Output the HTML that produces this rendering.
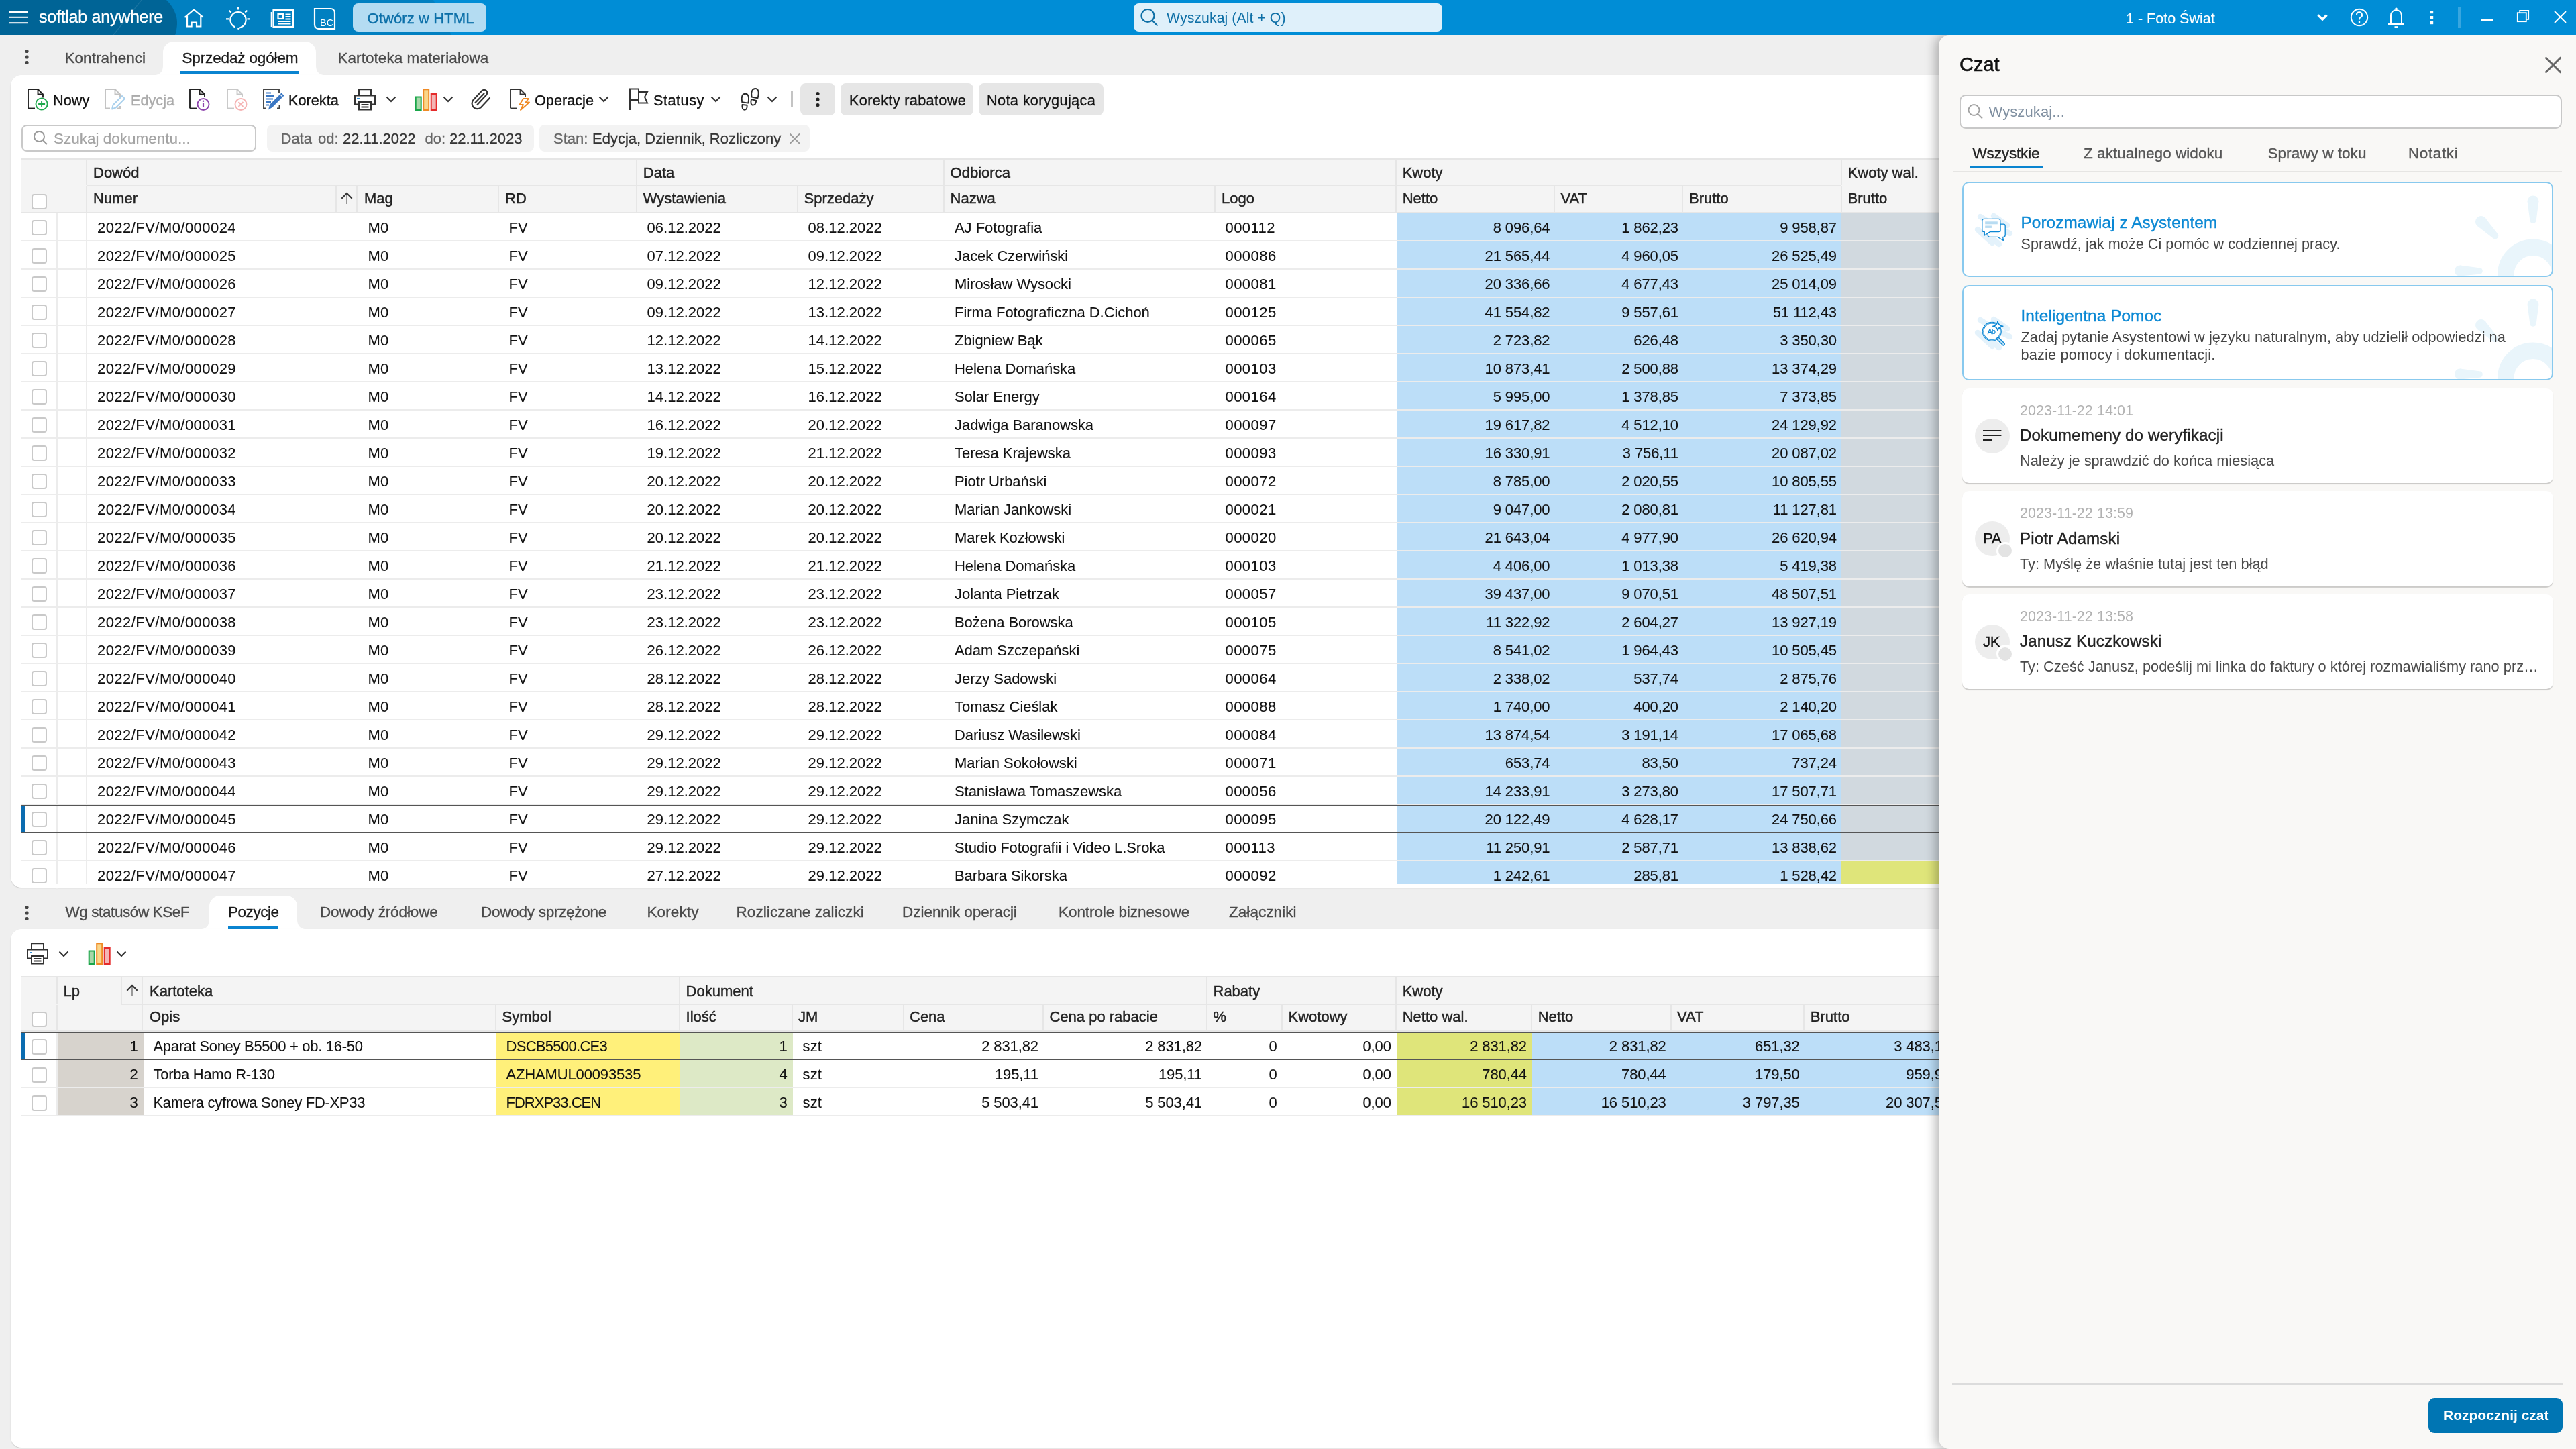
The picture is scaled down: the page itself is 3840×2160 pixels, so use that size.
<!DOCTYPE html><html><head><meta charset="utf-8"><title>softlab</title><style>
*{margin:0;padding:0}
html,body{width:3840px;height:2160px;overflow:hidden}
body{position:relative;background:#efefef;font-family:"Liberation Sans",sans-serif;}
.t{position:absolute;white-space:nowrap}
svg{overflow:visible}
</style></head><body><div id="root" style="position:absolute;left:0;top:0;width:3840px;height:2160px;overflow:hidden;will-change:transform">
<svg style="position:absolute;left:36px;top:72px;" width="10" height="26" viewBox="0 0 10 26"><circle cx="4" cy="4.5" r="2.6" fill="#444"/><circle cx="4" cy="13" r="2.6" fill="#444"/><circle cx="4" cy="21.5" r="2.6" fill="#444"/></svg>
<svg style="position:absolute;left:227px;top:62px;" width="260" height="51" viewBox="0 0 260 51"><path d="M0,50.5 Q16,50.5 16,36 V16 A16,16 0 0 1 32,0 H228 A16,16 0 0 1 244,16 V36 Q244,50.5 260,50.5 Z" fill="#fff"/></svg>
<div class="t" style="top:75.78px;font-size:22.5px;line-height:22.5px;color:#4a4a4a;left:96.50px;letter-spacing:0.05px;-webkit-text-stroke:0.35px #4a4a4a;">Kontrahenci</div>
<div class="t" style="top:75.78px;font-size:22.5px;line-height:22.5px;color:#1a1a1a;left:271.50px;letter-spacing:-0.15px;-webkit-text-stroke:0.35px #1a1a1a;">Sprzedaż ogółem</div>
<div style="position:absolute;left:269px;top:106px;width:177px;height:4px;background:#0a84d0;"></div>
<div class="t" style="top:75.78px;font-size:22.5px;line-height:22.5px;color:#4a4a4a;left:503.50px;letter-spacing:0.05px;-webkit-text-stroke:0.35px #4a4a4a;">Kartoteka materiałowa</div>
<div style="position:absolute;left:16px;top:112px;width:3808px;height:1211px;background:#fff;border-radius:16px;box-shadow:0 1px 1.5px rgba(0,0,0,0.16);"></div>
<svg style="position:absolute;left:40px;top:131px;" width="34" height="35" viewBox="0 0 34 35"><path d="M2,30.5 V2 H16.5 L24,9.5 V14.5" stroke="#222" stroke-width="1.9" fill="none"/><path d="M16.5,2 V9.5 H24" stroke="#222" stroke-width="1.9" fill="none"/><path d="M2,30.5 H12" stroke="#222" stroke-width="1.9"/><circle cx="22.1" cy="24" r="8.6" stroke="#1ea84c" stroke-width="1.9" fill="#fff"/><path d="M22.1,19 V29 M17.1,24 H27.1" stroke="#1ea84c" stroke-width="1.9"/></svg>
<div class="t" style="top:138.96px;font-size:21.7px;line-height:21.7px;color:#111;left:79.00px;-webkit-text-stroke:0.35px #111;">Nowy</div>
<svg style="position:absolute;left:155px;top:131px;" width="34" height="35" viewBox="0 0 34 35"><path d="M2,30.5 V2 H16.5 L24,9.5 V14" stroke="#c2c2c2" stroke-width="1.9" fill="none"/><path d="M16.5,2 V9.5 H24" stroke="#c2c2c2" stroke-width="1.9" fill="none"/><path d="M2,30.5 H9 M19,30.5 H24 V27" stroke="#c2c2c2" stroke-width="1.9" fill="none"/><path d="M12,31.5 L13.5,25.5 L27,12 L31,16 L17.5,29.5 Z" stroke="#a9d0ec" stroke-width="1.9" fill="none" stroke-linejoin="round"/></svg>
<div class="t" style="top:138.96px;font-size:21.7px;line-height:21.7px;color:#ababab;left:195.00px;-webkit-text-stroke:0.35px #ababab;">Edycja</div>
<svg style="position:absolute;left:281px;top:131px;" width="34" height="35" viewBox="0 0 34 35"><path d="M2,30.5 V2 H16.5 L24,9.5 V14" stroke="#222" stroke-width="1.9" fill="none"/><path d="M16.5,2 V9.5 H24" stroke="#222" stroke-width="1.9" fill="none"/><path d="M2,30.5 H12" stroke="#222" stroke-width="1.9"/><circle cx="22" cy="24.5" r="8.5" stroke="#8e44ad" stroke-width="1.9" fill="#fff"/><path d="M22,22.5 V29" stroke="#8e44ad" stroke-width="2.2"/><circle cx="22" cy="19.8" r="1.3" fill="#8e44ad"/></svg>
<svg style="position:absolute;left:337px;top:131px;" width="34" height="35" viewBox="0 0 34 35"><path d="M2,30.5 V2 H16.5 L24,9.5 V14" stroke="#c8c8c8" stroke-width="1.9" fill="none"/><path d="M16.5,2 V9.5 H24" stroke="#c8c8c8" stroke-width="1.9" fill="none"/><path d="M2,30.5 H12" stroke="#c8c8c8" stroke-width="1.9"/><circle cx="22" cy="24.5" r="8.5" stroke="#f5b4b4" stroke-width="1.9" fill="#fff"/><path d="M18.5,21 L25.5,28 M25.5,21 L18.5,28" stroke="#f5b4b4" stroke-width="1.9"/></svg>
<svg style="position:absolute;left:391px;top:131px;" width="34" height="35" viewBox="0 0 34 35"><path d="M6,30.5 H2 V2 H25 V8" stroke="#444" stroke-width="1.9" fill="none"/><path d="M22,30.5 H25.5 V26" stroke="#444" stroke-width="1.9" fill="none"/><path d="M6,7.5 H13 M6,12 H18 M6,16.5 H16 M6,21 H13 M6,25.5 H10" stroke="#3a77c3" stroke-width="2"/><path d="M9,32.5 L11,25 L26,10 L30,14 L15,29 Z" fill="#3a77c3"/><path d="M26.8,9.2 L28.5,7.5 L32.5,11.5 L30.8,13.2 Z" fill="#3a77c3"/></svg>
<div class="t" style="top:138.96px;font-size:21.7px;line-height:21.7px;color:#111;left:430.00px;-webkit-text-stroke:0.35px #111;">Korekta</div>
<svg style="position:absolute;left:526px;top:130px;" width="36" height="36" viewBox="0 0 36 36"><path d="M9,11 V3.3 H27 V11" stroke="#333" stroke-width="2" fill="none"/><path d="M9,25.5 H3 V12.5 H33 V25.5 H27" stroke="#333" stroke-width="2" fill="none"/><rect x="9" y="22" width="18" height="11.5" stroke="#333" stroke-width="2" fill="#fff"/><path d="M12.5,26 H23.5 M12.5,29.5 H23.5" stroke="#333" stroke-width="1.8"/><path d="M6,17 H10" stroke="#1b83d0" stroke-width="1.8"/></svg>
<svg style="position:absolute;left:575px;top:142px;" width="16" height="12" viewBox="0 0 16 12"><path d="M1.5,2.5 L8,9 L14.5,2.5" stroke="#333" stroke-width="2" fill="none"/></svg>
<svg style="position:absolute;left:617px;top:130px;" width="36" height="36" viewBox="0 0 36 36"><rect x="2.7" y="14.5" width="8" height="19.5" stroke="#1aa64a" stroke-width="2" fill="#a7d8a9"/><rect x="14.2" y="3.3" width="8" height="30.7" stroke="#ef8a25" stroke-width="2" fill="#f9d68a"/><rect x="25.7" y="10" width="8" height="24" stroke="#e52b2b" stroke-width="2" fill="#f3b5b5"/></svg>
<svg style="position:absolute;left:660px;top:142px;" width="16" height="12" viewBox="0 0 16 12"><path d="M1.5,2.5 L8,9 L14.5,2.5" stroke="#333" stroke-width="2" fill="none"/></svg>
<svg style="position:absolute;left:701px;top:130px;" width="34" height="36" viewBox="0 0 34 36"><path d="M10.5,26 L24,11.5 A4.6,4.6 0 0 0 17.5,5 L4.5,19 A8,8 0 0 0 15.5,30.5 L29,16" stroke="#333" stroke-width="2.2" fill="none" stroke-linecap="round"/><path d="M7.5,23 L20.5,9.5" stroke="#333" stroke-width="2.2" fill="none" stroke-linecap="round"/></svg>
<svg style="position:absolute;left:759px;top:131px;" width="34" height="35" viewBox="0 0 34 35"><path d="M2,30.5 V2 H16.5 L24,9.5 V14" stroke="#333" stroke-width="1.9" fill="none"/><path d="M16.5,2 V9.5 H24" stroke="#333" stroke-width="1.9" fill="none"/><path d="M2,30.5 H12" stroke="#333" stroke-width="1.9"/><path d="M21,16 L15.5,25 H21 L17,33 L30,21.5 H24.5 L29,16 Z" stroke="#ef8a25" stroke-width="1.9" fill="#fff" stroke-linejoin="round"/></svg>
<div class="t" style="top:138.96px;font-size:21.7px;line-height:21.7px;color:#111;left:797.00px;-webkit-text-stroke:0.35px #111;">Operacje</div>
<svg style="position:absolute;left:892px;top:142px;" width="16" height="12" viewBox="0 0 16 12"><path d="M1.5,2.5 L8,9 L14.5,2.5" stroke="#333" stroke-width="2" fill="none"/></svg>
<svg style="position:absolute;left:936px;top:130px;" width="34" height="36" viewBox="0 0 34 36"><path d="M3,34 V2.5 H16 V7 H29 L25,14.5 L29,23.5 H16 V19 H3" stroke="#333" stroke-width="2" fill="none"/><path d="M16,7 V19" stroke="#333" stroke-width="2"/></svg>
<div class="t" style="top:138.96px;font-size:21.7px;line-height:21.7px;color:#111;left:974.00px;letter-spacing:0.5px;-webkit-text-stroke:0.35px #111;">Statusy</div>
<svg style="position:absolute;left:1059px;top:142px;" width="16" height="12" viewBox="0 0 16 12"><path d="M1.5,2.5 L8,9 L14.5,2.5" stroke="#333" stroke-width="2" fill="none"/></svg>
<svg style="position:absolute;left:1103px;top:130px;" width="30" height="36" viewBox="0 0 30 36"><path d="M3.2,22.2 C1.8,15 3,9.8 8,9.8 C13,9.8 13.8,15 12.4,23.6 Z" stroke="#2a2a2a" stroke-width="1.9" fill="none" stroke-linejoin="round"/><path d="M3.5,26 L10.6,26.8 C11,31 9.5,33.8 7,33.8 C4,33.8 3,30.5 3.5,26 Z" stroke="#2a2a2a" stroke-width="1.9" fill="none" stroke-linejoin="round"/><path d="M17.5,14.5 C16,7 18.5,2 23,2 C27.5,2 29,7 26.5,16.3 Z" stroke="#2a2a2a" stroke-width="1.9" fill="none" stroke-linejoin="round"/><path d="M17,18 L24.3,19.8 C24,24 22,26.6 19.5,26.6 C16.5,26.6 15.5,23 17,18 Z" stroke="#2a2a2a" stroke-width="1.9" fill="none" stroke-linejoin="round"/></svg>
<svg style="position:absolute;left:1143px;top:142px;" width="16" height="12" viewBox="0 0 16 12"><path d="M1.5,2.5 L8,9 L14.5,2.5" stroke="#333" stroke-width="2" fill="none"/></svg>
<div style="position:absolute;left:1179px;top:136px;width:2.5px;height:24px;background:#c4c4c4;"></div>
<div style="position:absolute;left:1193px;top:124px;width:52px;height:48px;background:#e6e6e6;border-radius:8px;"></div>
<svg style="position:absolute;left:1213px;top:135px;" width="12" height="26" viewBox="0 0 12 26"><circle cx="6" cy="4.5" r="2.6" fill="#222"/><circle cx="6" cy="13" r="2.6" fill="#222"/><circle cx="6" cy="21.5" r="2.6" fill="#222"/></svg>
<div style="position:absolute;left:1253px;top:124px;width:198px;height:48px;background:#e6e6e6;border-radius:8px;"></div>
<div class="t" style="top:138.96px;font-size:21.7px;line-height:21.7px;color:#111;left:1266.00px;letter-spacing:0.33px;-webkit-text-stroke:0.35px #111;">Korekty rabatowe</div>
<div style="position:absolute;left:1459px;top:124px;width:186px;height:48px;background:#e6e6e6;border-radius:8px;"></div>
<div class="t" style="top:138.96px;font-size:21.7px;line-height:21.7px;color:#111;left:1471.00px;letter-spacing:0.36px;-webkit-text-stroke:0.35px #111;">Nota korygująca</div>
<div style="position:absolute;left:32px;top:186px;width:349.5px;height:40px;background:#fff;box-sizing:border-box;border:2px solid #c9c9c9;border-radius:8px;"></div>
<svg style="position:absolute;left:48px;top:193px;" width="26" height="26" viewBox="0 0 26 26"><circle cx="10.5" cy="10.5" r="7.5" stroke="#9a9a9a" stroke-width="2" fill="none"/><path d="M16,16 L22,22" stroke="#9a9a9a" stroke-width="2"/></svg>
<div class="t" style="top:195.78px;font-size:22.5px;line-height:22.5px;color:#a3a3a3;left:80.00px;-webkit-text-stroke:0.2px #a3a3a3;">Szukaj dokumentu...</div>
<div style="position:absolute;left:398px;top:186px;width:397.5px;height:40px;background:#f3f3f3;border-radius:8px;"></div>
<div class="t" style="top:195.60px;font-size:22px;line-height:22px;color:#666;left:418.50px;-webkit-text-stroke:0.3px #666;">Data</div>
<div class="t" style="top:195.60px;font-size:22px;line-height:22px;color:#666;left:474.00px;-webkit-text-stroke:0.3px #666;">od:</div>
<div class="t" style="top:195.60px;font-size:22px;line-height:22px;color:#333;left:511.00px;-webkit-text-stroke:0.3px #333;">22.11.2022</div>
<div class="t" style="top:195.60px;font-size:22px;line-height:22px;color:#666;left:633.50px;-webkit-text-stroke:0.3px #666;">do:</div>
<div class="t" style="top:195.60px;font-size:22px;line-height:22px;color:#333;left:670.00px;-webkit-text-stroke:0.3px #333;">22.11.2023</div>
<div style="position:absolute;left:804px;top:186px;width:403px;height:40px;background:#f3f3f3;border-radius:8px;"></div>
<div class="t" style="top:195.60px;font-size:22px;line-height:22px;color:#666;left:825.00px;-webkit-text-stroke:0.3px #666;">Stan:</div>
<div class="t" style="top:195.60px;font-size:22px;line-height:22px;color:#333;left:883.00px;-webkit-text-stroke:0.3px #333;">Edycja, Dziennik, Rozliczony</div>
<svg style="position:absolute;left:1175px;top:197px;" width="20" height="20" viewBox="0 0 20 20"><path d="M2.5,2.5 L17,17 M17,2.5 L2.5,17" stroke="#9a9a9a" stroke-width="1.8"/></svg>
<div style="position:absolute;left:32px;top:236px;width:2868px;height:2px;background:#e6e6e6;"></div>
<div style="position:absolute;left:32px;top:238px;width:2868px;height:78px;background:#f4f4f4;"></div>
<div style="position:absolute;left:129px;top:276px;width:2615.8px;height:2px;background:#e6e6e6;"></div>
<div style="position:absolute;left:32px;top:316px;width:2868px;height:2px;background:#e6e6e6;"></div>
<div style="position:absolute;left:128px;top:238px;width:2px;height:38px;background:#e6e6e6;"></div>
<div style="position:absolute;left:947.8px;top:238px;width:2px;height:38px;background:#e6e6e6;"></div>
<div style="position:absolute;left:1405.7px;top:238px;width:2px;height:38px;background:#e6e6e6;"></div>
<div style="position:absolute;left:2079.7px;top:238px;width:2px;height:38px;background:#e6e6e6;"></div>
<div style="position:absolute;left:2743.8px;top:238px;width:2px;height:38px;background:#e6e6e6;"></div>
<div style="position:absolute;left:128px;top:278px;width:2px;height:38px;background:#e6e6e6;"></div>
<div style="position:absolute;left:499.6px;top:278px;width:2px;height:38px;background:#e6e6e6;"></div>
<div style="position:absolute;left:531.4px;top:278px;width:2px;height:38px;background:#e6e6e6;"></div>
<div style="position:absolute;left:741.6px;top:278px;width:2px;height:38px;background:#e6e6e6;"></div>
<div style="position:absolute;left:947.8px;top:278px;width:2px;height:38px;background:#e6e6e6;"></div>
<div style="position:absolute;left:1187.6px;top:278px;width:2px;height:38px;background:#e6e6e6;"></div>
<div style="position:absolute;left:1405.7px;top:278px;width:2px;height:38px;background:#e6e6e6;"></div>
<div style="position:absolute;left:1810px;top:278px;width:2px;height:38px;background:#e6e6e6;"></div>
<div style="position:absolute;left:2079.7px;top:278px;width:2px;height:38px;background:#e6e6e6;"></div>
<div style="position:absolute;left:2315.8px;top:278px;width:2px;height:38px;background:#e6e6e6;"></div>
<div style="position:absolute;left:2507.3px;top:278px;width:2px;height:38px;background:#e6e6e6;"></div>
<div style="position:absolute;left:2743.8px;top:278px;width:2px;height:38px;background:#e6e6e6;"></div>
<div style="position:absolute;left:46.5px;top:288.5px;width:23px;height:23px;background:#fff;box-sizing:border-box;border:2px solid #c9c9c9;border-radius:4px;"></div>
<div class="t" style="top:247.00px;font-size:22px;line-height:22px;color:#222;left:139.00px;-webkit-text-stroke:0.45px #222;">Dowód</div>
<div class="t" style="top:247.00px;font-size:22px;line-height:22px;color:#222;left:958.80px;-webkit-text-stroke:0.45px #222;">Data</div>
<div class="t" style="top:247.00px;font-size:22px;line-height:22px;color:#222;left:1416.60px;-webkit-text-stroke:0.45px #222;">Odbiorca</div>
<div class="t" style="top:247.00px;font-size:22px;line-height:22px;color:#222;left:2090.70px;-webkit-text-stroke:0.45px #222;">Kwoty</div>
<div class="t" style="top:247.00px;font-size:22px;line-height:22px;color:#222;left:2754.60px;-webkit-text-stroke:0.45px #222;">Kwoty wal.</div>
<div class="t" style="top:285.00px;font-size:22px;line-height:22px;color:#222;left:139.00px;-webkit-text-stroke:0.45px #222;">Numer</div>
<div class="t" style="top:285.00px;font-size:22px;line-height:22px;color:#222;left:543.00px;-webkit-text-stroke:0.45px #222;">Mag</div>
<div class="t" style="top:285.00px;font-size:22px;line-height:22px;color:#222;left:753.00px;-webkit-text-stroke:0.45px #222;">RD</div>
<div class="t" style="top:285.00px;font-size:22px;line-height:22px;color:#222;left:958.80px;-webkit-text-stroke:0.45px #222;">Wystawienia</div>
<div class="t" style="top:285.00px;font-size:22px;line-height:22px;color:#222;left:1198.50px;-webkit-text-stroke:0.45px #222;">Sprzedaży</div>
<div class="t" style="top:285.00px;font-size:22px;line-height:22px;color:#222;left:1416.60px;-webkit-text-stroke:0.45px #222;">Nazwa</div>
<div class="t" style="top:285.00px;font-size:22px;line-height:22px;color:#222;left:1821.00px;-webkit-text-stroke:0.45px #222;">Logo</div>
<div class="t" style="top:285.00px;font-size:22px;line-height:22px;color:#222;left:2090.70px;-webkit-text-stroke:0.45px #222;">Netto</div>
<div class="t" style="top:285.00px;font-size:22px;line-height:22px;color:#222;left:2326.50px;-webkit-text-stroke:0.45px #222;">VAT</div>
<div class="t" style="top:285.00px;font-size:22px;line-height:22px;color:#222;left:2518.00px;-webkit-text-stroke:0.45px #222;">Brutto</div>
<div class="t" style="top:285.00px;font-size:22px;line-height:22px;color:#222;left:2754.60px;-webkit-text-stroke:0.45px #222;">Brutto</div>
<svg style="position:absolute;left:507px;top:285px;" width="20" height="20" viewBox="0 0 20 20"><path d="M10,4 V19" stroke="#888" stroke-width="1.7"/><path d="M2.3,10.8 L10,3 L17.7,10.8" stroke="#333" stroke-width="2" fill="none"/></svg>
<div style="position:absolute;left:2082px;top:318px;width:662.8000000000002px;height:40px;background:#bcdef8;"></div>
<div style="position:absolute;left:2744.8px;top:318px;width:155.19999999999982px;height:40px;background:#d1d9df;"></div>
<div style="position:absolute;left:32px;top:358px;width:2868px;height:2px;background:#ececec;"></div>
<div style="position:absolute;left:84.2px;top:318px;width:1.6px;height:42px;background:#ececec;"></div>
<div style="position:absolute;left:128.2px;top:318px;width:1.6px;height:42px;background:#ececec;"></div>
<div style="position:absolute;left:46.5px;top:327.5px;width:23px;height:23px;background:#fff;box-sizing:border-box;border:2px solid #c9c9c9;border-radius:4px;"></div>
<div class="t" style="top:329.00px;font-size:22px;line-height:22px;color:#111;left:145.00px;letter-spacing:0.45px;-webkit-text-stroke:0.12px #111;">2022/FV/M0/000024</div>
<div class="t" style="top:329.00px;font-size:22px;line-height:22px;color:#111;left:548.50px;letter-spacing:0.15px;-webkit-text-stroke:0.12px #111;">M0</div>
<div class="t" style="top:329.00px;font-size:22px;line-height:22px;color:#111;left:758.50px;letter-spacing:0.15px;-webkit-text-stroke:0.12px #111;">FV</div>
<div class="t" style="top:329.00px;font-size:22px;line-height:22px;color:#111;left:964.50px;letter-spacing:0.02px;-webkit-text-stroke:0.12px #111;">06.12.2022</div>
<div class="t" style="top:329.00px;font-size:22px;line-height:22px;color:#111;left:1204.50px;letter-spacing:0.02px;-webkit-text-stroke:0.12px #111;">08.12.2022</div>
<div class="t" style="top:329.00px;font-size:22px;line-height:22px;color:#111;left:1423.00px;letter-spacing:-0.05px;-webkit-text-stroke:0.12px #111;">AJ Fotografia</div>
<div class="t" style="top:329.00px;font-size:22px;line-height:22px;color:#111;left:1826.50px;letter-spacing:0.45px;-webkit-text-stroke:0.12px #111;">000112</div>
<div class="t" style="top:329.00px;font-size:22px;line-height:22px;color:#111;right:1529.50px;letter-spacing:-0.1px;-webkit-text-stroke:0.12px #111;">8 096,64</div>
<div class="t" style="top:329.00px;font-size:22px;line-height:22px;color:#111;right:1338.00px;letter-spacing:-0.1px;-webkit-text-stroke:0.12px #111;">1 862,23</div>
<div class="t" style="top:329.00px;font-size:22px;line-height:22px;color:#111;right:1102.00px;letter-spacing:-0.1px;-webkit-text-stroke:0.12px #111;">9 958,87</div>
<div style="position:absolute;left:2082px;top:360px;width:662.8000000000002px;height:40px;background:#bcdef8;"></div>
<div style="position:absolute;left:2744.8px;top:360px;width:155.19999999999982px;height:40px;background:#d1d9df;"></div>
<div style="position:absolute;left:32px;top:400px;width:2868px;height:2px;background:#ececec;"></div>
<div style="position:absolute;left:84.2px;top:360px;width:1.6px;height:42px;background:#ececec;"></div>
<div style="position:absolute;left:128.2px;top:360px;width:1.6px;height:42px;background:#ececec;"></div>
<div style="position:absolute;left:46.5px;top:369.5px;width:23px;height:23px;background:#fff;box-sizing:border-box;border:2px solid #c9c9c9;border-radius:4px;"></div>
<div class="t" style="top:371.00px;font-size:22px;line-height:22px;color:#111;left:145.00px;letter-spacing:0.45px;-webkit-text-stroke:0.12px #111;">2022/FV/M0/000025</div>
<div class="t" style="top:371.00px;font-size:22px;line-height:22px;color:#111;left:548.50px;letter-spacing:0.15px;-webkit-text-stroke:0.12px #111;">M0</div>
<div class="t" style="top:371.00px;font-size:22px;line-height:22px;color:#111;left:758.50px;letter-spacing:0.15px;-webkit-text-stroke:0.12px #111;">FV</div>
<div class="t" style="top:371.00px;font-size:22px;line-height:22px;color:#111;left:964.50px;letter-spacing:0.02px;-webkit-text-stroke:0.12px #111;">07.12.2022</div>
<div class="t" style="top:371.00px;font-size:22px;line-height:22px;color:#111;left:1204.50px;letter-spacing:0.02px;-webkit-text-stroke:0.12px #111;">09.12.2022</div>
<div class="t" style="top:371.00px;font-size:22px;line-height:22px;color:#111;left:1423.00px;letter-spacing:-0.05px;-webkit-text-stroke:0.12px #111;">Jacek Czerwiński</div>
<div class="t" style="top:371.00px;font-size:22px;line-height:22px;color:#111;left:1826.50px;letter-spacing:0.45px;-webkit-text-stroke:0.12px #111;">000086</div>
<div class="t" style="top:371.00px;font-size:22px;line-height:22px;color:#111;right:1529.50px;letter-spacing:-0.1px;-webkit-text-stroke:0.12px #111;">21 565,44</div>
<div class="t" style="top:371.00px;font-size:22px;line-height:22px;color:#111;right:1338.00px;letter-spacing:-0.1px;-webkit-text-stroke:0.12px #111;">4 960,05</div>
<div class="t" style="top:371.00px;font-size:22px;line-height:22px;color:#111;right:1102.00px;letter-spacing:-0.1px;-webkit-text-stroke:0.12px #111;">26 525,49</div>
<div style="position:absolute;left:2082px;top:402px;width:662.8000000000002px;height:40px;background:#bcdef8;"></div>
<div style="position:absolute;left:2744.8px;top:402px;width:155.19999999999982px;height:40px;background:#d1d9df;"></div>
<div style="position:absolute;left:32px;top:442px;width:2868px;height:2px;background:#ececec;"></div>
<div style="position:absolute;left:84.2px;top:402px;width:1.6px;height:42px;background:#ececec;"></div>
<div style="position:absolute;left:128.2px;top:402px;width:1.6px;height:42px;background:#ececec;"></div>
<div style="position:absolute;left:46.5px;top:411.5px;width:23px;height:23px;background:#fff;box-sizing:border-box;border:2px solid #c9c9c9;border-radius:4px;"></div>
<div class="t" style="top:413.00px;font-size:22px;line-height:22px;color:#111;left:145.00px;letter-spacing:0.45px;-webkit-text-stroke:0.12px #111;">2022/FV/M0/000026</div>
<div class="t" style="top:413.00px;font-size:22px;line-height:22px;color:#111;left:548.50px;letter-spacing:0.15px;-webkit-text-stroke:0.12px #111;">M0</div>
<div class="t" style="top:413.00px;font-size:22px;line-height:22px;color:#111;left:758.50px;letter-spacing:0.15px;-webkit-text-stroke:0.12px #111;">FV</div>
<div class="t" style="top:413.00px;font-size:22px;line-height:22px;color:#111;left:964.50px;letter-spacing:0.02px;-webkit-text-stroke:0.12px #111;">09.12.2022</div>
<div class="t" style="top:413.00px;font-size:22px;line-height:22px;color:#111;left:1204.50px;letter-spacing:0.02px;-webkit-text-stroke:0.12px #111;">12.12.2022</div>
<div class="t" style="top:413.00px;font-size:22px;line-height:22px;color:#111;left:1423.00px;letter-spacing:-0.05px;-webkit-text-stroke:0.12px #111;">Mirosław Wysocki</div>
<div class="t" style="top:413.00px;font-size:22px;line-height:22px;color:#111;left:1826.50px;letter-spacing:0.45px;-webkit-text-stroke:0.12px #111;">000081</div>
<div class="t" style="top:413.00px;font-size:22px;line-height:22px;color:#111;right:1529.50px;letter-spacing:-0.1px;-webkit-text-stroke:0.12px #111;">20 336,66</div>
<div class="t" style="top:413.00px;font-size:22px;line-height:22px;color:#111;right:1338.00px;letter-spacing:-0.1px;-webkit-text-stroke:0.12px #111;">4 677,43</div>
<div class="t" style="top:413.00px;font-size:22px;line-height:22px;color:#111;right:1102.00px;letter-spacing:-0.1px;-webkit-text-stroke:0.12px #111;">25 014,09</div>
<div style="position:absolute;left:2082px;top:444px;width:662.8000000000002px;height:40px;background:#bcdef8;"></div>
<div style="position:absolute;left:2744.8px;top:444px;width:155.19999999999982px;height:40px;background:#d1d9df;"></div>
<div style="position:absolute;left:32px;top:484px;width:2868px;height:2px;background:#ececec;"></div>
<div style="position:absolute;left:84.2px;top:444px;width:1.6px;height:42px;background:#ececec;"></div>
<div style="position:absolute;left:128.2px;top:444px;width:1.6px;height:42px;background:#ececec;"></div>
<div style="position:absolute;left:46.5px;top:453.5px;width:23px;height:23px;background:#fff;box-sizing:border-box;border:2px solid #c9c9c9;border-radius:4px;"></div>
<div class="t" style="top:455.00px;font-size:22px;line-height:22px;color:#111;left:145.00px;letter-spacing:0.45px;-webkit-text-stroke:0.12px #111;">2022/FV/M0/000027</div>
<div class="t" style="top:455.00px;font-size:22px;line-height:22px;color:#111;left:548.50px;letter-spacing:0.15px;-webkit-text-stroke:0.12px #111;">M0</div>
<div class="t" style="top:455.00px;font-size:22px;line-height:22px;color:#111;left:758.50px;letter-spacing:0.15px;-webkit-text-stroke:0.12px #111;">FV</div>
<div class="t" style="top:455.00px;font-size:22px;line-height:22px;color:#111;left:964.50px;letter-spacing:0.02px;-webkit-text-stroke:0.12px #111;">09.12.2022</div>
<div class="t" style="top:455.00px;font-size:22px;line-height:22px;color:#111;left:1204.50px;letter-spacing:0.02px;-webkit-text-stroke:0.12px #111;">13.12.2022</div>
<div class="t" style="top:455.00px;font-size:22px;line-height:22px;color:#111;left:1423.00px;letter-spacing:-0.05px;-webkit-text-stroke:0.12px #111;">Firma Fotograficzna D.Cichoń</div>
<div class="t" style="top:455.00px;font-size:22px;line-height:22px;color:#111;left:1826.50px;letter-spacing:0.45px;-webkit-text-stroke:0.12px #111;">000125</div>
<div class="t" style="top:455.00px;font-size:22px;line-height:22px;color:#111;right:1529.50px;letter-spacing:-0.1px;-webkit-text-stroke:0.12px #111;">41 554,82</div>
<div class="t" style="top:455.00px;font-size:22px;line-height:22px;color:#111;right:1338.00px;letter-spacing:-0.1px;-webkit-text-stroke:0.12px #111;">9 557,61</div>
<div class="t" style="top:455.00px;font-size:22px;line-height:22px;color:#111;right:1102.00px;letter-spacing:-0.1px;-webkit-text-stroke:0.12px #111;">51 112,43</div>
<div style="position:absolute;left:2082px;top:486px;width:662.8000000000002px;height:40px;background:#bcdef8;"></div>
<div style="position:absolute;left:2744.8px;top:486px;width:155.19999999999982px;height:40px;background:#d1d9df;"></div>
<div style="position:absolute;left:32px;top:526px;width:2868px;height:2px;background:#ececec;"></div>
<div style="position:absolute;left:84.2px;top:486px;width:1.6px;height:42px;background:#ececec;"></div>
<div style="position:absolute;left:128.2px;top:486px;width:1.6px;height:42px;background:#ececec;"></div>
<div style="position:absolute;left:46.5px;top:495.5px;width:23px;height:23px;background:#fff;box-sizing:border-box;border:2px solid #c9c9c9;border-radius:4px;"></div>
<div class="t" style="top:497.00px;font-size:22px;line-height:22px;color:#111;left:145.00px;letter-spacing:0.45px;-webkit-text-stroke:0.12px #111;">2022/FV/M0/000028</div>
<div class="t" style="top:497.00px;font-size:22px;line-height:22px;color:#111;left:548.50px;letter-spacing:0.15px;-webkit-text-stroke:0.12px #111;">M0</div>
<div class="t" style="top:497.00px;font-size:22px;line-height:22px;color:#111;left:758.50px;letter-spacing:0.15px;-webkit-text-stroke:0.12px #111;">FV</div>
<div class="t" style="top:497.00px;font-size:22px;line-height:22px;color:#111;left:964.50px;letter-spacing:0.02px;-webkit-text-stroke:0.12px #111;">12.12.2022</div>
<div class="t" style="top:497.00px;font-size:22px;line-height:22px;color:#111;left:1204.50px;letter-spacing:0.02px;-webkit-text-stroke:0.12px #111;">14.12.2022</div>
<div class="t" style="top:497.00px;font-size:22px;line-height:22px;color:#111;left:1423.00px;letter-spacing:-0.05px;-webkit-text-stroke:0.12px #111;">Zbigniew Bąk</div>
<div class="t" style="top:497.00px;font-size:22px;line-height:22px;color:#111;left:1826.50px;letter-spacing:0.45px;-webkit-text-stroke:0.12px #111;">000065</div>
<div class="t" style="top:497.00px;font-size:22px;line-height:22px;color:#111;right:1529.50px;letter-spacing:-0.1px;-webkit-text-stroke:0.12px #111;">2 723,82</div>
<div class="t" style="top:497.00px;font-size:22px;line-height:22px;color:#111;right:1338.00px;letter-spacing:-0.1px;-webkit-text-stroke:0.12px #111;">626,48</div>
<div class="t" style="top:497.00px;font-size:22px;line-height:22px;color:#111;right:1102.00px;letter-spacing:-0.1px;-webkit-text-stroke:0.12px #111;">3 350,30</div>
<div style="position:absolute;left:2082px;top:528px;width:662.8000000000002px;height:40px;background:#bcdef8;"></div>
<div style="position:absolute;left:2744.8px;top:528px;width:155.19999999999982px;height:40px;background:#d1d9df;"></div>
<div style="position:absolute;left:32px;top:568px;width:2868px;height:2px;background:#ececec;"></div>
<div style="position:absolute;left:84.2px;top:528px;width:1.6px;height:42px;background:#ececec;"></div>
<div style="position:absolute;left:128.2px;top:528px;width:1.6px;height:42px;background:#ececec;"></div>
<div style="position:absolute;left:46.5px;top:537.5px;width:23px;height:23px;background:#fff;box-sizing:border-box;border:2px solid #c9c9c9;border-radius:4px;"></div>
<div class="t" style="top:539.00px;font-size:22px;line-height:22px;color:#111;left:145.00px;letter-spacing:0.45px;-webkit-text-stroke:0.12px #111;">2022/FV/M0/000029</div>
<div class="t" style="top:539.00px;font-size:22px;line-height:22px;color:#111;left:548.50px;letter-spacing:0.15px;-webkit-text-stroke:0.12px #111;">M0</div>
<div class="t" style="top:539.00px;font-size:22px;line-height:22px;color:#111;left:758.50px;letter-spacing:0.15px;-webkit-text-stroke:0.12px #111;">FV</div>
<div class="t" style="top:539.00px;font-size:22px;line-height:22px;color:#111;left:964.50px;letter-spacing:0.02px;-webkit-text-stroke:0.12px #111;">13.12.2022</div>
<div class="t" style="top:539.00px;font-size:22px;line-height:22px;color:#111;left:1204.50px;letter-spacing:0.02px;-webkit-text-stroke:0.12px #111;">15.12.2022</div>
<div class="t" style="top:539.00px;font-size:22px;line-height:22px;color:#111;left:1423.00px;letter-spacing:-0.05px;-webkit-text-stroke:0.12px #111;">Helena Domańska</div>
<div class="t" style="top:539.00px;font-size:22px;line-height:22px;color:#111;left:1826.50px;letter-spacing:0.45px;-webkit-text-stroke:0.12px #111;">000103</div>
<div class="t" style="top:539.00px;font-size:22px;line-height:22px;color:#111;right:1529.50px;letter-spacing:-0.1px;-webkit-text-stroke:0.12px #111;">10 873,41</div>
<div class="t" style="top:539.00px;font-size:22px;line-height:22px;color:#111;right:1338.00px;letter-spacing:-0.1px;-webkit-text-stroke:0.12px #111;">2 500,88</div>
<div class="t" style="top:539.00px;font-size:22px;line-height:22px;color:#111;right:1102.00px;letter-spacing:-0.1px;-webkit-text-stroke:0.12px #111;">13 374,29</div>
<div style="position:absolute;left:2082px;top:570px;width:662.8000000000002px;height:40px;background:#bcdef8;"></div>
<div style="position:absolute;left:2744.8px;top:570px;width:155.19999999999982px;height:40px;background:#d1d9df;"></div>
<div style="position:absolute;left:32px;top:610px;width:2868px;height:2px;background:#ececec;"></div>
<div style="position:absolute;left:84.2px;top:570px;width:1.6px;height:42px;background:#ececec;"></div>
<div style="position:absolute;left:128.2px;top:570px;width:1.6px;height:42px;background:#ececec;"></div>
<div style="position:absolute;left:46.5px;top:579.5px;width:23px;height:23px;background:#fff;box-sizing:border-box;border:2px solid #c9c9c9;border-radius:4px;"></div>
<div class="t" style="top:581.00px;font-size:22px;line-height:22px;color:#111;left:145.00px;letter-spacing:0.45px;-webkit-text-stroke:0.12px #111;">2022/FV/M0/000030</div>
<div class="t" style="top:581.00px;font-size:22px;line-height:22px;color:#111;left:548.50px;letter-spacing:0.15px;-webkit-text-stroke:0.12px #111;">M0</div>
<div class="t" style="top:581.00px;font-size:22px;line-height:22px;color:#111;left:758.50px;letter-spacing:0.15px;-webkit-text-stroke:0.12px #111;">FV</div>
<div class="t" style="top:581.00px;font-size:22px;line-height:22px;color:#111;left:964.50px;letter-spacing:0.02px;-webkit-text-stroke:0.12px #111;">14.12.2022</div>
<div class="t" style="top:581.00px;font-size:22px;line-height:22px;color:#111;left:1204.50px;letter-spacing:0.02px;-webkit-text-stroke:0.12px #111;">16.12.2022</div>
<div class="t" style="top:581.00px;font-size:22px;line-height:22px;color:#111;left:1423.00px;letter-spacing:-0.05px;-webkit-text-stroke:0.12px #111;">Solar Energy</div>
<div class="t" style="top:581.00px;font-size:22px;line-height:22px;color:#111;left:1826.50px;letter-spacing:0.45px;-webkit-text-stroke:0.12px #111;">000164</div>
<div class="t" style="top:581.00px;font-size:22px;line-height:22px;color:#111;right:1529.50px;letter-spacing:-0.1px;-webkit-text-stroke:0.12px #111;">5 995,00</div>
<div class="t" style="top:581.00px;font-size:22px;line-height:22px;color:#111;right:1338.00px;letter-spacing:-0.1px;-webkit-text-stroke:0.12px #111;">1 378,85</div>
<div class="t" style="top:581.00px;font-size:22px;line-height:22px;color:#111;right:1102.00px;letter-spacing:-0.1px;-webkit-text-stroke:0.12px #111;">7 373,85</div>
<div style="position:absolute;left:2082px;top:612px;width:662.8000000000002px;height:40px;background:#bcdef8;"></div>
<div style="position:absolute;left:2744.8px;top:612px;width:155.19999999999982px;height:40px;background:#d1d9df;"></div>
<div style="position:absolute;left:32px;top:652px;width:2868px;height:2px;background:#ececec;"></div>
<div style="position:absolute;left:84.2px;top:612px;width:1.6px;height:42px;background:#ececec;"></div>
<div style="position:absolute;left:128.2px;top:612px;width:1.6px;height:42px;background:#ececec;"></div>
<div style="position:absolute;left:46.5px;top:621.5px;width:23px;height:23px;background:#fff;box-sizing:border-box;border:2px solid #c9c9c9;border-radius:4px;"></div>
<div class="t" style="top:623.00px;font-size:22px;line-height:22px;color:#111;left:145.00px;letter-spacing:0.45px;-webkit-text-stroke:0.12px #111;">2022/FV/M0/000031</div>
<div class="t" style="top:623.00px;font-size:22px;line-height:22px;color:#111;left:548.50px;letter-spacing:0.15px;-webkit-text-stroke:0.12px #111;">M0</div>
<div class="t" style="top:623.00px;font-size:22px;line-height:22px;color:#111;left:758.50px;letter-spacing:0.15px;-webkit-text-stroke:0.12px #111;">FV</div>
<div class="t" style="top:623.00px;font-size:22px;line-height:22px;color:#111;left:964.50px;letter-spacing:0.02px;-webkit-text-stroke:0.12px #111;">16.12.2022</div>
<div class="t" style="top:623.00px;font-size:22px;line-height:22px;color:#111;left:1204.50px;letter-spacing:0.02px;-webkit-text-stroke:0.12px #111;">20.12.2022</div>
<div class="t" style="top:623.00px;font-size:22px;line-height:22px;color:#111;left:1423.00px;letter-spacing:-0.05px;-webkit-text-stroke:0.12px #111;">Jadwiga Baranowska</div>
<div class="t" style="top:623.00px;font-size:22px;line-height:22px;color:#111;left:1826.50px;letter-spacing:0.45px;-webkit-text-stroke:0.12px #111;">000097</div>
<div class="t" style="top:623.00px;font-size:22px;line-height:22px;color:#111;right:1529.50px;letter-spacing:-0.1px;-webkit-text-stroke:0.12px #111;">19 617,82</div>
<div class="t" style="top:623.00px;font-size:22px;line-height:22px;color:#111;right:1338.00px;letter-spacing:-0.1px;-webkit-text-stroke:0.12px #111;">4 512,10</div>
<div class="t" style="top:623.00px;font-size:22px;line-height:22px;color:#111;right:1102.00px;letter-spacing:-0.1px;-webkit-text-stroke:0.12px #111;">24 129,92</div>
<div style="position:absolute;left:2082px;top:654px;width:662.8000000000002px;height:40px;background:#bcdef8;"></div>
<div style="position:absolute;left:2744.8px;top:654px;width:155.19999999999982px;height:40px;background:#d1d9df;"></div>
<div style="position:absolute;left:32px;top:694px;width:2868px;height:2px;background:#ececec;"></div>
<div style="position:absolute;left:84.2px;top:654px;width:1.6px;height:42px;background:#ececec;"></div>
<div style="position:absolute;left:128.2px;top:654px;width:1.6px;height:42px;background:#ececec;"></div>
<div style="position:absolute;left:46.5px;top:663.5px;width:23px;height:23px;background:#fff;box-sizing:border-box;border:2px solid #c9c9c9;border-radius:4px;"></div>
<div class="t" style="top:665.00px;font-size:22px;line-height:22px;color:#111;left:145.00px;letter-spacing:0.45px;-webkit-text-stroke:0.12px #111;">2022/FV/M0/000032</div>
<div class="t" style="top:665.00px;font-size:22px;line-height:22px;color:#111;left:548.50px;letter-spacing:0.15px;-webkit-text-stroke:0.12px #111;">M0</div>
<div class="t" style="top:665.00px;font-size:22px;line-height:22px;color:#111;left:758.50px;letter-spacing:0.15px;-webkit-text-stroke:0.12px #111;">FV</div>
<div class="t" style="top:665.00px;font-size:22px;line-height:22px;color:#111;left:964.50px;letter-spacing:0.02px;-webkit-text-stroke:0.12px #111;">19.12.2022</div>
<div class="t" style="top:665.00px;font-size:22px;line-height:22px;color:#111;left:1204.50px;letter-spacing:0.02px;-webkit-text-stroke:0.12px #111;">21.12.2022</div>
<div class="t" style="top:665.00px;font-size:22px;line-height:22px;color:#111;left:1423.00px;letter-spacing:-0.05px;-webkit-text-stroke:0.12px #111;">Teresa Krajewska</div>
<div class="t" style="top:665.00px;font-size:22px;line-height:22px;color:#111;left:1826.50px;letter-spacing:0.45px;-webkit-text-stroke:0.12px #111;">000093</div>
<div class="t" style="top:665.00px;font-size:22px;line-height:22px;color:#111;right:1529.50px;letter-spacing:-0.1px;-webkit-text-stroke:0.12px #111;">16 330,91</div>
<div class="t" style="top:665.00px;font-size:22px;line-height:22px;color:#111;right:1338.00px;letter-spacing:-0.1px;-webkit-text-stroke:0.12px #111;">3 756,11</div>
<div class="t" style="top:665.00px;font-size:22px;line-height:22px;color:#111;right:1102.00px;letter-spacing:-0.1px;-webkit-text-stroke:0.12px #111;">20 087,02</div>
<div style="position:absolute;left:2082px;top:696px;width:662.8000000000002px;height:40px;background:#bcdef8;"></div>
<div style="position:absolute;left:2744.8px;top:696px;width:155.19999999999982px;height:40px;background:#d1d9df;"></div>
<div style="position:absolute;left:32px;top:736px;width:2868px;height:2px;background:#ececec;"></div>
<div style="position:absolute;left:84.2px;top:696px;width:1.6px;height:42px;background:#ececec;"></div>
<div style="position:absolute;left:128.2px;top:696px;width:1.6px;height:42px;background:#ececec;"></div>
<div style="position:absolute;left:46.5px;top:705.5px;width:23px;height:23px;background:#fff;box-sizing:border-box;border:2px solid #c9c9c9;border-radius:4px;"></div>
<div class="t" style="top:707.00px;font-size:22px;line-height:22px;color:#111;left:145.00px;letter-spacing:0.45px;-webkit-text-stroke:0.12px #111;">2022/FV/M0/000033</div>
<div class="t" style="top:707.00px;font-size:22px;line-height:22px;color:#111;left:548.50px;letter-spacing:0.15px;-webkit-text-stroke:0.12px #111;">M0</div>
<div class="t" style="top:707.00px;font-size:22px;line-height:22px;color:#111;left:758.50px;letter-spacing:0.15px;-webkit-text-stroke:0.12px #111;">FV</div>
<div class="t" style="top:707.00px;font-size:22px;line-height:22px;color:#111;left:964.50px;letter-spacing:0.02px;-webkit-text-stroke:0.12px #111;">20.12.2022</div>
<div class="t" style="top:707.00px;font-size:22px;line-height:22px;color:#111;left:1204.50px;letter-spacing:0.02px;-webkit-text-stroke:0.12px #111;">20.12.2022</div>
<div class="t" style="top:707.00px;font-size:22px;line-height:22px;color:#111;left:1423.00px;letter-spacing:-0.05px;-webkit-text-stroke:0.12px #111;">Piotr Urbański</div>
<div class="t" style="top:707.00px;font-size:22px;line-height:22px;color:#111;left:1826.50px;letter-spacing:0.45px;-webkit-text-stroke:0.12px #111;">000072</div>
<div class="t" style="top:707.00px;font-size:22px;line-height:22px;color:#111;right:1529.50px;letter-spacing:-0.1px;-webkit-text-stroke:0.12px #111;">8 785,00</div>
<div class="t" style="top:707.00px;font-size:22px;line-height:22px;color:#111;right:1338.00px;letter-spacing:-0.1px;-webkit-text-stroke:0.12px #111;">2 020,55</div>
<div class="t" style="top:707.00px;font-size:22px;line-height:22px;color:#111;right:1102.00px;letter-spacing:-0.1px;-webkit-text-stroke:0.12px #111;">10 805,55</div>
<div style="position:absolute;left:2082px;top:738px;width:662.8000000000002px;height:40px;background:#bcdef8;"></div>
<div style="position:absolute;left:2744.8px;top:738px;width:155.19999999999982px;height:40px;background:#d1d9df;"></div>
<div style="position:absolute;left:32px;top:778px;width:2868px;height:2px;background:#ececec;"></div>
<div style="position:absolute;left:84.2px;top:738px;width:1.6px;height:42px;background:#ececec;"></div>
<div style="position:absolute;left:128.2px;top:738px;width:1.6px;height:42px;background:#ececec;"></div>
<div style="position:absolute;left:46.5px;top:747.5px;width:23px;height:23px;background:#fff;box-sizing:border-box;border:2px solid #c9c9c9;border-radius:4px;"></div>
<div class="t" style="top:749.00px;font-size:22px;line-height:22px;color:#111;left:145.00px;letter-spacing:0.45px;-webkit-text-stroke:0.12px #111;">2022/FV/M0/000034</div>
<div class="t" style="top:749.00px;font-size:22px;line-height:22px;color:#111;left:548.50px;letter-spacing:0.15px;-webkit-text-stroke:0.12px #111;">M0</div>
<div class="t" style="top:749.00px;font-size:22px;line-height:22px;color:#111;left:758.50px;letter-spacing:0.15px;-webkit-text-stroke:0.12px #111;">FV</div>
<div class="t" style="top:749.00px;font-size:22px;line-height:22px;color:#111;left:964.50px;letter-spacing:0.02px;-webkit-text-stroke:0.12px #111;">20.12.2022</div>
<div class="t" style="top:749.00px;font-size:22px;line-height:22px;color:#111;left:1204.50px;letter-spacing:0.02px;-webkit-text-stroke:0.12px #111;">20.12.2022</div>
<div class="t" style="top:749.00px;font-size:22px;line-height:22px;color:#111;left:1423.00px;letter-spacing:-0.05px;-webkit-text-stroke:0.12px #111;">Marian Jankowski</div>
<div class="t" style="top:749.00px;font-size:22px;line-height:22px;color:#111;left:1826.50px;letter-spacing:0.45px;-webkit-text-stroke:0.12px #111;">000021</div>
<div class="t" style="top:749.00px;font-size:22px;line-height:22px;color:#111;right:1529.50px;letter-spacing:-0.1px;-webkit-text-stroke:0.12px #111;">9 047,00</div>
<div class="t" style="top:749.00px;font-size:22px;line-height:22px;color:#111;right:1338.00px;letter-spacing:-0.1px;-webkit-text-stroke:0.12px #111;">2 080,81</div>
<div class="t" style="top:749.00px;font-size:22px;line-height:22px;color:#111;right:1102.00px;letter-spacing:-0.1px;-webkit-text-stroke:0.12px #111;">11 127,81</div>
<div style="position:absolute;left:2082px;top:780px;width:662.8000000000002px;height:40px;background:#bcdef8;"></div>
<div style="position:absolute;left:2744.8px;top:780px;width:155.19999999999982px;height:40px;background:#d1d9df;"></div>
<div style="position:absolute;left:32px;top:820px;width:2868px;height:2px;background:#ececec;"></div>
<div style="position:absolute;left:84.2px;top:780px;width:1.6px;height:42px;background:#ececec;"></div>
<div style="position:absolute;left:128.2px;top:780px;width:1.6px;height:42px;background:#ececec;"></div>
<div style="position:absolute;left:46.5px;top:789.5px;width:23px;height:23px;background:#fff;box-sizing:border-box;border:2px solid #c9c9c9;border-radius:4px;"></div>
<div class="t" style="top:791.00px;font-size:22px;line-height:22px;color:#111;left:145.00px;letter-spacing:0.45px;-webkit-text-stroke:0.12px #111;">2022/FV/M0/000035</div>
<div class="t" style="top:791.00px;font-size:22px;line-height:22px;color:#111;left:548.50px;letter-spacing:0.15px;-webkit-text-stroke:0.12px #111;">M0</div>
<div class="t" style="top:791.00px;font-size:22px;line-height:22px;color:#111;left:758.50px;letter-spacing:0.15px;-webkit-text-stroke:0.12px #111;">FV</div>
<div class="t" style="top:791.00px;font-size:22px;line-height:22px;color:#111;left:964.50px;letter-spacing:0.02px;-webkit-text-stroke:0.12px #111;">20.12.2022</div>
<div class="t" style="top:791.00px;font-size:22px;line-height:22px;color:#111;left:1204.50px;letter-spacing:0.02px;-webkit-text-stroke:0.12px #111;">20.12.2022</div>
<div class="t" style="top:791.00px;font-size:22px;line-height:22px;color:#111;left:1423.00px;letter-spacing:-0.05px;-webkit-text-stroke:0.12px #111;">Marek Kozłowski</div>
<div class="t" style="top:791.00px;font-size:22px;line-height:22px;color:#111;left:1826.50px;letter-spacing:0.45px;-webkit-text-stroke:0.12px #111;">000020</div>
<div class="t" style="top:791.00px;font-size:22px;line-height:22px;color:#111;right:1529.50px;letter-spacing:-0.1px;-webkit-text-stroke:0.12px #111;">21 643,04</div>
<div class="t" style="top:791.00px;font-size:22px;line-height:22px;color:#111;right:1338.00px;letter-spacing:-0.1px;-webkit-text-stroke:0.12px #111;">4 977,90</div>
<div class="t" style="top:791.00px;font-size:22px;line-height:22px;color:#111;right:1102.00px;letter-spacing:-0.1px;-webkit-text-stroke:0.12px #111;">26 620,94</div>
<div style="position:absolute;left:2082px;top:822px;width:662.8000000000002px;height:40px;background:#bcdef8;"></div>
<div style="position:absolute;left:2744.8px;top:822px;width:155.19999999999982px;height:40px;background:#d1d9df;"></div>
<div style="position:absolute;left:32px;top:862px;width:2868px;height:2px;background:#ececec;"></div>
<div style="position:absolute;left:84.2px;top:822px;width:1.6px;height:42px;background:#ececec;"></div>
<div style="position:absolute;left:128.2px;top:822px;width:1.6px;height:42px;background:#ececec;"></div>
<div style="position:absolute;left:46.5px;top:831.5px;width:23px;height:23px;background:#fff;box-sizing:border-box;border:2px solid #c9c9c9;border-radius:4px;"></div>
<div class="t" style="top:833.00px;font-size:22px;line-height:22px;color:#111;left:145.00px;letter-spacing:0.45px;-webkit-text-stroke:0.12px #111;">2022/FV/M0/000036</div>
<div class="t" style="top:833.00px;font-size:22px;line-height:22px;color:#111;left:548.50px;letter-spacing:0.15px;-webkit-text-stroke:0.12px #111;">M0</div>
<div class="t" style="top:833.00px;font-size:22px;line-height:22px;color:#111;left:758.50px;letter-spacing:0.15px;-webkit-text-stroke:0.12px #111;">FV</div>
<div class="t" style="top:833.00px;font-size:22px;line-height:22px;color:#111;left:964.50px;letter-spacing:0.02px;-webkit-text-stroke:0.12px #111;">21.12.2022</div>
<div class="t" style="top:833.00px;font-size:22px;line-height:22px;color:#111;left:1204.50px;letter-spacing:0.02px;-webkit-text-stroke:0.12px #111;">21.12.2022</div>
<div class="t" style="top:833.00px;font-size:22px;line-height:22px;color:#111;left:1423.00px;letter-spacing:-0.05px;-webkit-text-stroke:0.12px #111;">Helena Domańska</div>
<div class="t" style="top:833.00px;font-size:22px;line-height:22px;color:#111;left:1826.50px;letter-spacing:0.45px;-webkit-text-stroke:0.12px #111;">000103</div>
<div class="t" style="top:833.00px;font-size:22px;line-height:22px;color:#111;right:1529.50px;letter-spacing:-0.1px;-webkit-text-stroke:0.12px #111;">4 406,00</div>
<div class="t" style="top:833.00px;font-size:22px;line-height:22px;color:#111;right:1338.00px;letter-spacing:-0.1px;-webkit-text-stroke:0.12px #111;">1 013,38</div>
<div class="t" style="top:833.00px;font-size:22px;line-height:22px;color:#111;right:1102.00px;letter-spacing:-0.1px;-webkit-text-stroke:0.12px #111;">5 419,38</div>
<div style="position:absolute;left:2082px;top:864px;width:662.8000000000002px;height:40px;background:#bcdef8;"></div>
<div style="position:absolute;left:2744.8px;top:864px;width:155.19999999999982px;height:40px;background:#d1d9df;"></div>
<div style="position:absolute;left:32px;top:904px;width:2868px;height:2px;background:#ececec;"></div>
<div style="position:absolute;left:84.2px;top:864px;width:1.6px;height:42px;background:#ececec;"></div>
<div style="position:absolute;left:128.2px;top:864px;width:1.6px;height:42px;background:#ececec;"></div>
<div style="position:absolute;left:46.5px;top:873.5px;width:23px;height:23px;background:#fff;box-sizing:border-box;border:2px solid #c9c9c9;border-radius:4px;"></div>
<div class="t" style="top:875.00px;font-size:22px;line-height:22px;color:#111;left:145.00px;letter-spacing:0.45px;-webkit-text-stroke:0.12px #111;">2022/FV/M0/000037</div>
<div class="t" style="top:875.00px;font-size:22px;line-height:22px;color:#111;left:548.50px;letter-spacing:0.15px;-webkit-text-stroke:0.12px #111;">M0</div>
<div class="t" style="top:875.00px;font-size:22px;line-height:22px;color:#111;left:758.50px;letter-spacing:0.15px;-webkit-text-stroke:0.12px #111;">FV</div>
<div class="t" style="top:875.00px;font-size:22px;line-height:22px;color:#111;left:964.50px;letter-spacing:0.02px;-webkit-text-stroke:0.12px #111;">23.12.2022</div>
<div class="t" style="top:875.00px;font-size:22px;line-height:22px;color:#111;left:1204.50px;letter-spacing:0.02px;-webkit-text-stroke:0.12px #111;">23.12.2022</div>
<div class="t" style="top:875.00px;font-size:22px;line-height:22px;color:#111;left:1423.00px;letter-spacing:-0.05px;-webkit-text-stroke:0.12px #111;">Jolanta Pietrzak</div>
<div class="t" style="top:875.00px;font-size:22px;line-height:22px;color:#111;left:1826.50px;letter-spacing:0.45px;-webkit-text-stroke:0.12px #111;">000057</div>
<div class="t" style="top:875.00px;font-size:22px;line-height:22px;color:#111;right:1529.50px;letter-spacing:-0.1px;-webkit-text-stroke:0.12px #111;">39 437,00</div>
<div class="t" style="top:875.00px;font-size:22px;line-height:22px;color:#111;right:1338.00px;letter-spacing:-0.1px;-webkit-text-stroke:0.12px #111;">9 070,51</div>
<div class="t" style="top:875.00px;font-size:22px;line-height:22px;color:#111;right:1102.00px;letter-spacing:-0.1px;-webkit-text-stroke:0.12px #111;">48 507,51</div>
<div style="position:absolute;left:2082px;top:906px;width:662.8000000000002px;height:40px;background:#bcdef8;"></div>
<div style="position:absolute;left:2744.8px;top:906px;width:155.19999999999982px;height:40px;background:#d1d9df;"></div>
<div style="position:absolute;left:32px;top:946px;width:2868px;height:2px;background:#ececec;"></div>
<div style="position:absolute;left:84.2px;top:906px;width:1.6px;height:42px;background:#ececec;"></div>
<div style="position:absolute;left:128.2px;top:906px;width:1.6px;height:42px;background:#ececec;"></div>
<div style="position:absolute;left:46.5px;top:915.5px;width:23px;height:23px;background:#fff;box-sizing:border-box;border:2px solid #c9c9c9;border-radius:4px;"></div>
<div class="t" style="top:917.00px;font-size:22px;line-height:22px;color:#111;left:145.00px;letter-spacing:0.45px;-webkit-text-stroke:0.12px #111;">2022/FV/M0/000038</div>
<div class="t" style="top:917.00px;font-size:22px;line-height:22px;color:#111;left:548.50px;letter-spacing:0.15px;-webkit-text-stroke:0.12px #111;">M0</div>
<div class="t" style="top:917.00px;font-size:22px;line-height:22px;color:#111;left:758.50px;letter-spacing:0.15px;-webkit-text-stroke:0.12px #111;">FV</div>
<div class="t" style="top:917.00px;font-size:22px;line-height:22px;color:#111;left:964.50px;letter-spacing:0.02px;-webkit-text-stroke:0.12px #111;">23.12.2022</div>
<div class="t" style="top:917.00px;font-size:22px;line-height:22px;color:#111;left:1204.50px;letter-spacing:0.02px;-webkit-text-stroke:0.12px #111;">23.12.2022</div>
<div class="t" style="top:917.00px;font-size:22px;line-height:22px;color:#111;left:1423.00px;letter-spacing:-0.05px;-webkit-text-stroke:0.12px #111;">Bożena Borowska</div>
<div class="t" style="top:917.00px;font-size:22px;line-height:22px;color:#111;left:1826.50px;letter-spacing:0.45px;-webkit-text-stroke:0.12px #111;">000105</div>
<div class="t" style="top:917.00px;font-size:22px;line-height:22px;color:#111;right:1529.50px;letter-spacing:-0.1px;-webkit-text-stroke:0.12px #111;">11 322,92</div>
<div class="t" style="top:917.00px;font-size:22px;line-height:22px;color:#111;right:1338.00px;letter-spacing:-0.1px;-webkit-text-stroke:0.12px #111;">2 604,27</div>
<div class="t" style="top:917.00px;font-size:22px;line-height:22px;color:#111;right:1102.00px;letter-spacing:-0.1px;-webkit-text-stroke:0.12px #111;">13 927,19</div>
<div style="position:absolute;left:2082px;top:948px;width:662.8000000000002px;height:40px;background:#bcdef8;"></div>
<div style="position:absolute;left:2744.8px;top:948px;width:155.19999999999982px;height:40px;background:#d1d9df;"></div>
<div style="position:absolute;left:32px;top:988px;width:2868px;height:2px;background:#ececec;"></div>
<div style="position:absolute;left:84.2px;top:948px;width:1.6px;height:42px;background:#ececec;"></div>
<div style="position:absolute;left:128.2px;top:948px;width:1.6px;height:42px;background:#ececec;"></div>
<div style="position:absolute;left:46.5px;top:957.5px;width:23px;height:23px;background:#fff;box-sizing:border-box;border:2px solid #c9c9c9;border-radius:4px;"></div>
<div class="t" style="top:959.00px;font-size:22px;line-height:22px;color:#111;left:145.00px;letter-spacing:0.45px;-webkit-text-stroke:0.12px #111;">2022/FV/M0/000039</div>
<div class="t" style="top:959.00px;font-size:22px;line-height:22px;color:#111;left:548.50px;letter-spacing:0.15px;-webkit-text-stroke:0.12px #111;">M0</div>
<div class="t" style="top:959.00px;font-size:22px;line-height:22px;color:#111;left:758.50px;letter-spacing:0.15px;-webkit-text-stroke:0.12px #111;">FV</div>
<div class="t" style="top:959.00px;font-size:22px;line-height:22px;color:#111;left:964.50px;letter-spacing:0.02px;-webkit-text-stroke:0.12px #111;">26.12.2022</div>
<div class="t" style="top:959.00px;font-size:22px;line-height:22px;color:#111;left:1204.50px;letter-spacing:0.02px;-webkit-text-stroke:0.12px #111;">26.12.2022</div>
<div class="t" style="top:959.00px;font-size:22px;line-height:22px;color:#111;left:1423.00px;letter-spacing:-0.05px;-webkit-text-stroke:0.12px #111;">Adam Szczepański</div>
<div class="t" style="top:959.00px;font-size:22px;line-height:22px;color:#111;left:1826.50px;letter-spacing:0.45px;-webkit-text-stroke:0.12px #111;">000075</div>
<div class="t" style="top:959.00px;font-size:22px;line-height:22px;color:#111;right:1529.50px;letter-spacing:-0.1px;-webkit-text-stroke:0.12px #111;">8 541,02</div>
<div class="t" style="top:959.00px;font-size:22px;line-height:22px;color:#111;right:1338.00px;letter-spacing:-0.1px;-webkit-text-stroke:0.12px #111;">1 964,43</div>
<div class="t" style="top:959.00px;font-size:22px;line-height:22px;color:#111;right:1102.00px;letter-spacing:-0.1px;-webkit-text-stroke:0.12px #111;">10 505,45</div>
<div style="position:absolute;left:2082px;top:990px;width:662.8000000000002px;height:40px;background:#bcdef8;"></div>
<div style="position:absolute;left:2744.8px;top:990px;width:155.19999999999982px;height:40px;background:#d1d9df;"></div>
<div style="position:absolute;left:32px;top:1030px;width:2868px;height:2px;background:#ececec;"></div>
<div style="position:absolute;left:84.2px;top:990px;width:1.6px;height:42px;background:#ececec;"></div>
<div style="position:absolute;left:128.2px;top:990px;width:1.6px;height:42px;background:#ececec;"></div>
<div style="position:absolute;left:46.5px;top:999.5px;width:23px;height:23px;background:#fff;box-sizing:border-box;border:2px solid #c9c9c9;border-radius:4px;"></div>
<div class="t" style="top:1001.00px;font-size:22px;line-height:22px;color:#111;left:145.00px;letter-spacing:0.45px;-webkit-text-stroke:0.12px #111;">2022/FV/M0/000040</div>
<div class="t" style="top:1001.00px;font-size:22px;line-height:22px;color:#111;left:548.50px;letter-spacing:0.15px;-webkit-text-stroke:0.12px #111;">M0</div>
<div class="t" style="top:1001.00px;font-size:22px;line-height:22px;color:#111;left:758.50px;letter-spacing:0.15px;-webkit-text-stroke:0.12px #111;">FV</div>
<div class="t" style="top:1001.00px;font-size:22px;line-height:22px;color:#111;left:964.50px;letter-spacing:0.02px;-webkit-text-stroke:0.12px #111;">28.12.2022</div>
<div class="t" style="top:1001.00px;font-size:22px;line-height:22px;color:#111;left:1204.50px;letter-spacing:0.02px;-webkit-text-stroke:0.12px #111;">28.12.2022</div>
<div class="t" style="top:1001.00px;font-size:22px;line-height:22px;color:#111;left:1423.00px;letter-spacing:-0.05px;-webkit-text-stroke:0.12px #111;">Jerzy Sadowski</div>
<div class="t" style="top:1001.00px;font-size:22px;line-height:22px;color:#111;left:1826.50px;letter-spacing:0.45px;-webkit-text-stroke:0.12px #111;">000064</div>
<div class="t" style="top:1001.00px;font-size:22px;line-height:22px;color:#111;right:1529.50px;letter-spacing:-0.1px;-webkit-text-stroke:0.12px #111;">2 338,02</div>
<div class="t" style="top:1001.00px;font-size:22px;line-height:22px;color:#111;right:1338.00px;letter-spacing:-0.1px;-webkit-text-stroke:0.12px #111;">537,74</div>
<div class="t" style="top:1001.00px;font-size:22px;line-height:22px;color:#111;right:1102.00px;letter-spacing:-0.1px;-webkit-text-stroke:0.12px #111;">2 875,76</div>
<div style="position:absolute;left:2082px;top:1032px;width:662.8000000000002px;height:40px;background:#bcdef8;"></div>
<div style="position:absolute;left:2744.8px;top:1032px;width:155.19999999999982px;height:40px;background:#d1d9df;"></div>
<div style="position:absolute;left:32px;top:1072px;width:2868px;height:2px;background:#ececec;"></div>
<div style="position:absolute;left:84.2px;top:1032px;width:1.6px;height:42px;background:#ececec;"></div>
<div style="position:absolute;left:128.2px;top:1032px;width:1.6px;height:42px;background:#ececec;"></div>
<div style="position:absolute;left:46.5px;top:1041.5px;width:23px;height:23px;background:#fff;box-sizing:border-box;border:2px solid #c9c9c9;border-radius:4px;"></div>
<div class="t" style="top:1043.00px;font-size:22px;line-height:22px;color:#111;left:145.00px;letter-spacing:0.45px;-webkit-text-stroke:0.12px #111;">2022/FV/M0/000041</div>
<div class="t" style="top:1043.00px;font-size:22px;line-height:22px;color:#111;left:548.50px;letter-spacing:0.15px;-webkit-text-stroke:0.12px #111;">M0</div>
<div class="t" style="top:1043.00px;font-size:22px;line-height:22px;color:#111;left:758.50px;letter-spacing:0.15px;-webkit-text-stroke:0.12px #111;">FV</div>
<div class="t" style="top:1043.00px;font-size:22px;line-height:22px;color:#111;left:964.50px;letter-spacing:0.02px;-webkit-text-stroke:0.12px #111;">28.12.2022</div>
<div class="t" style="top:1043.00px;font-size:22px;line-height:22px;color:#111;left:1204.50px;letter-spacing:0.02px;-webkit-text-stroke:0.12px #111;">28.12.2022</div>
<div class="t" style="top:1043.00px;font-size:22px;line-height:22px;color:#111;left:1423.00px;letter-spacing:-0.05px;-webkit-text-stroke:0.12px #111;">Tomasz Cieślak</div>
<div class="t" style="top:1043.00px;font-size:22px;line-height:22px;color:#111;left:1826.50px;letter-spacing:0.45px;-webkit-text-stroke:0.12px #111;">000088</div>
<div class="t" style="top:1043.00px;font-size:22px;line-height:22px;color:#111;right:1529.50px;letter-spacing:-0.1px;-webkit-text-stroke:0.12px #111;">1 740,00</div>
<div class="t" style="top:1043.00px;font-size:22px;line-height:22px;color:#111;right:1338.00px;letter-spacing:-0.1px;-webkit-text-stroke:0.12px #111;">400,20</div>
<div class="t" style="top:1043.00px;font-size:22px;line-height:22px;color:#111;right:1102.00px;letter-spacing:-0.1px;-webkit-text-stroke:0.12px #111;">2 140,20</div>
<div style="position:absolute;left:2082px;top:1074px;width:662.8000000000002px;height:40px;background:#bcdef8;"></div>
<div style="position:absolute;left:2744.8px;top:1074px;width:155.19999999999982px;height:40px;background:#d1d9df;"></div>
<div style="position:absolute;left:32px;top:1114px;width:2868px;height:2px;background:#ececec;"></div>
<div style="position:absolute;left:84.2px;top:1074px;width:1.6px;height:42px;background:#ececec;"></div>
<div style="position:absolute;left:128.2px;top:1074px;width:1.6px;height:42px;background:#ececec;"></div>
<div style="position:absolute;left:46.5px;top:1083.5px;width:23px;height:23px;background:#fff;box-sizing:border-box;border:2px solid #c9c9c9;border-radius:4px;"></div>
<div class="t" style="top:1085.00px;font-size:22px;line-height:22px;color:#111;left:145.00px;letter-spacing:0.45px;-webkit-text-stroke:0.12px #111;">2022/FV/M0/000042</div>
<div class="t" style="top:1085.00px;font-size:22px;line-height:22px;color:#111;left:548.50px;letter-spacing:0.15px;-webkit-text-stroke:0.12px #111;">M0</div>
<div class="t" style="top:1085.00px;font-size:22px;line-height:22px;color:#111;left:758.50px;letter-spacing:0.15px;-webkit-text-stroke:0.12px #111;">FV</div>
<div class="t" style="top:1085.00px;font-size:22px;line-height:22px;color:#111;left:964.50px;letter-spacing:0.02px;-webkit-text-stroke:0.12px #111;">29.12.2022</div>
<div class="t" style="top:1085.00px;font-size:22px;line-height:22px;color:#111;left:1204.50px;letter-spacing:0.02px;-webkit-text-stroke:0.12px #111;">29.12.2022</div>
<div class="t" style="top:1085.00px;font-size:22px;line-height:22px;color:#111;left:1423.00px;letter-spacing:-0.05px;-webkit-text-stroke:0.12px #111;">Dariusz Wasilewski</div>
<div class="t" style="top:1085.00px;font-size:22px;line-height:22px;color:#111;left:1826.50px;letter-spacing:0.45px;-webkit-text-stroke:0.12px #111;">000084</div>
<div class="t" style="top:1085.00px;font-size:22px;line-height:22px;color:#111;right:1529.50px;letter-spacing:-0.1px;-webkit-text-stroke:0.12px #111;">13 874,54</div>
<div class="t" style="top:1085.00px;font-size:22px;line-height:22px;color:#111;right:1338.00px;letter-spacing:-0.1px;-webkit-text-stroke:0.12px #111;">3 191,14</div>
<div class="t" style="top:1085.00px;font-size:22px;line-height:22px;color:#111;right:1102.00px;letter-spacing:-0.1px;-webkit-text-stroke:0.12px #111;">17 065,68</div>
<div style="position:absolute;left:2082px;top:1116px;width:662.8000000000002px;height:40px;background:#bcdef8;"></div>
<div style="position:absolute;left:2744.8px;top:1116px;width:155.19999999999982px;height:40px;background:#d1d9df;"></div>
<div style="position:absolute;left:32px;top:1156px;width:2868px;height:2px;background:#ececec;"></div>
<div style="position:absolute;left:84.2px;top:1116px;width:1.6px;height:42px;background:#ececec;"></div>
<div style="position:absolute;left:128.2px;top:1116px;width:1.6px;height:42px;background:#ececec;"></div>
<div style="position:absolute;left:46.5px;top:1125.5px;width:23px;height:23px;background:#fff;box-sizing:border-box;border:2px solid #c9c9c9;border-radius:4px;"></div>
<div class="t" style="top:1127.00px;font-size:22px;line-height:22px;color:#111;left:145.00px;letter-spacing:0.45px;-webkit-text-stroke:0.12px #111;">2022/FV/M0/000043</div>
<div class="t" style="top:1127.00px;font-size:22px;line-height:22px;color:#111;left:548.50px;letter-spacing:0.15px;-webkit-text-stroke:0.12px #111;">M0</div>
<div class="t" style="top:1127.00px;font-size:22px;line-height:22px;color:#111;left:758.50px;letter-spacing:0.15px;-webkit-text-stroke:0.12px #111;">FV</div>
<div class="t" style="top:1127.00px;font-size:22px;line-height:22px;color:#111;left:964.50px;letter-spacing:0.02px;-webkit-text-stroke:0.12px #111;">29.12.2022</div>
<div class="t" style="top:1127.00px;font-size:22px;line-height:22px;color:#111;left:1204.50px;letter-spacing:0.02px;-webkit-text-stroke:0.12px #111;">29.12.2022</div>
<div class="t" style="top:1127.00px;font-size:22px;line-height:22px;color:#111;left:1423.00px;letter-spacing:-0.05px;-webkit-text-stroke:0.12px #111;">Marian Sokołowski</div>
<div class="t" style="top:1127.00px;font-size:22px;line-height:22px;color:#111;left:1826.50px;letter-spacing:0.45px;-webkit-text-stroke:0.12px #111;">000071</div>
<div class="t" style="top:1127.00px;font-size:22px;line-height:22px;color:#111;right:1529.50px;letter-spacing:-0.1px;-webkit-text-stroke:0.12px #111;">653,74</div>
<div class="t" style="top:1127.00px;font-size:22px;line-height:22px;color:#111;right:1338.00px;letter-spacing:-0.1px;-webkit-text-stroke:0.12px #111;">83,50</div>
<div class="t" style="top:1127.00px;font-size:22px;line-height:22px;color:#111;right:1102.00px;letter-spacing:-0.1px;-webkit-text-stroke:0.12px #111;">737,24</div>
<div style="position:absolute;left:2082px;top:1158px;width:662.8000000000002px;height:40px;background:#bcdef8;"></div>
<div style="position:absolute;left:2744.8px;top:1158px;width:155.19999999999982px;height:40px;background:#d1d9df;"></div>
<div style="position:absolute;left:32px;top:1198px;width:2868px;height:2px;background:#ececec;"></div>
<div style="position:absolute;left:84.2px;top:1158px;width:1.6px;height:42px;background:#ececec;"></div>
<div style="position:absolute;left:128.2px;top:1158px;width:1.6px;height:42px;background:#ececec;"></div>
<div style="position:absolute;left:46.5px;top:1167.5px;width:23px;height:23px;background:#fff;box-sizing:border-box;border:2px solid #c9c9c9;border-radius:4px;"></div>
<div class="t" style="top:1169.00px;font-size:22px;line-height:22px;color:#111;left:145.00px;letter-spacing:0.45px;-webkit-text-stroke:0.12px #111;">2022/FV/M0/000044</div>
<div class="t" style="top:1169.00px;font-size:22px;line-height:22px;color:#111;left:548.50px;letter-spacing:0.15px;-webkit-text-stroke:0.12px #111;">M0</div>
<div class="t" style="top:1169.00px;font-size:22px;line-height:22px;color:#111;left:758.50px;letter-spacing:0.15px;-webkit-text-stroke:0.12px #111;">FV</div>
<div class="t" style="top:1169.00px;font-size:22px;line-height:22px;color:#111;left:964.50px;letter-spacing:0.02px;-webkit-text-stroke:0.12px #111;">29.12.2022</div>
<div class="t" style="top:1169.00px;font-size:22px;line-height:22px;color:#111;left:1204.50px;letter-spacing:0.02px;-webkit-text-stroke:0.12px #111;">29.12.2022</div>
<div class="t" style="top:1169.00px;font-size:22px;line-height:22px;color:#111;left:1423.00px;letter-spacing:-0.05px;-webkit-text-stroke:0.12px #111;">Stanisława Tomaszewska</div>
<div class="t" style="top:1169.00px;font-size:22px;line-height:22px;color:#111;left:1826.50px;letter-spacing:0.45px;-webkit-text-stroke:0.12px #111;">000056</div>
<div class="t" style="top:1169.00px;font-size:22px;line-height:22px;color:#111;right:1529.50px;letter-spacing:-0.1px;-webkit-text-stroke:0.12px #111;">14 233,91</div>
<div class="t" style="top:1169.00px;font-size:22px;line-height:22px;color:#111;right:1338.00px;letter-spacing:-0.1px;-webkit-text-stroke:0.12px #111;">3 273,80</div>
<div class="t" style="top:1169.00px;font-size:22px;line-height:22px;color:#111;right:1102.00px;letter-spacing:-0.1px;-webkit-text-stroke:0.12px #111;">17 507,71</div>
<div style="position:absolute;left:2082px;top:1200px;width:662.8000000000002px;height:40px;background:#bcdef8;"></div>
<div style="position:absolute;left:2744.8px;top:1200px;width:155.19999999999982px;height:40px;background:#d1d9df;"></div>
<div style="position:absolute;left:32px;top:1240px;width:2868px;height:2px;background:#ececec;"></div>
<div style="position:absolute;left:84.2px;top:1200px;width:1.6px;height:42px;background:#ececec;"></div>
<div style="position:absolute;left:128.2px;top:1200px;width:1.6px;height:42px;background:#ececec;"></div>
<div style="position:absolute;left:46.5px;top:1209.5px;width:23px;height:23px;background:#fff;box-sizing:border-box;border:2px solid #c9c9c9;border-radius:4px;"></div>
<div class="t" style="top:1211.00px;font-size:22px;line-height:22px;color:#111;left:145.00px;letter-spacing:0.45px;-webkit-text-stroke:0.12px #111;">2022/FV/M0/000045</div>
<div class="t" style="top:1211.00px;font-size:22px;line-height:22px;color:#111;left:548.50px;letter-spacing:0.15px;-webkit-text-stroke:0.12px #111;">M0</div>
<div class="t" style="top:1211.00px;font-size:22px;line-height:22px;color:#111;left:758.50px;letter-spacing:0.15px;-webkit-text-stroke:0.12px #111;">FV</div>
<div class="t" style="top:1211.00px;font-size:22px;line-height:22px;color:#111;left:964.50px;letter-spacing:0.02px;-webkit-text-stroke:0.12px #111;">29.12.2022</div>
<div class="t" style="top:1211.00px;font-size:22px;line-height:22px;color:#111;left:1204.50px;letter-spacing:0.02px;-webkit-text-stroke:0.12px #111;">29.12.2022</div>
<div class="t" style="top:1211.00px;font-size:22px;line-height:22px;color:#111;left:1423.00px;letter-spacing:-0.05px;-webkit-text-stroke:0.12px #111;">Janina Szymczak</div>
<div class="t" style="top:1211.00px;font-size:22px;line-height:22px;color:#111;left:1826.50px;letter-spacing:0.45px;-webkit-text-stroke:0.12px #111;">000095</div>
<div class="t" style="top:1211.00px;font-size:22px;line-height:22px;color:#111;right:1529.50px;letter-spacing:-0.1px;-webkit-text-stroke:0.12px #111;">20 122,49</div>
<div class="t" style="top:1211.00px;font-size:22px;line-height:22px;color:#111;right:1338.00px;letter-spacing:-0.1px;-webkit-text-stroke:0.12px #111;">4 628,17</div>
<div class="t" style="top:1211.00px;font-size:22px;line-height:22px;color:#111;right:1102.00px;letter-spacing:-0.1px;-webkit-text-stroke:0.12px #111;">24 750,66</div>
<div style="position:absolute;left:2082px;top:1242px;width:662.8000000000002px;height:40px;background:#bcdef8;"></div>
<div style="position:absolute;left:2744.8px;top:1242px;width:155.19999999999982px;height:40px;background:#d1d9df;"></div>
<div style="position:absolute;left:32px;top:1282px;width:2868px;height:2px;background:#ececec;"></div>
<div style="position:absolute;left:84.2px;top:1242px;width:1.6px;height:42px;background:#ececec;"></div>
<div style="position:absolute;left:128.2px;top:1242px;width:1.6px;height:42px;background:#ececec;"></div>
<div style="position:absolute;left:46.5px;top:1251.5px;width:23px;height:23px;background:#fff;box-sizing:border-box;border:2px solid #c9c9c9;border-radius:4px;"></div>
<div class="t" style="top:1253.00px;font-size:22px;line-height:22px;color:#111;left:145.00px;letter-spacing:0.45px;-webkit-text-stroke:0.12px #111;">2022/FV/M0/000046</div>
<div class="t" style="top:1253.00px;font-size:22px;line-height:22px;color:#111;left:548.50px;letter-spacing:0.15px;-webkit-text-stroke:0.12px #111;">M0</div>
<div class="t" style="top:1253.00px;font-size:22px;line-height:22px;color:#111;left:758.50px;letter-spacing:0.15px;-webkit-text-stroke:0.12px #111;">FV</div>
<div class="t" style="top:1253.00px;font-size:22px;line-height:22px;color:#111;left:964.50px;letter-spacing:0.02px;-webkit-text-stroke:0.12px #111;">29.12.2022</div>
<div class="t" style="top:1253.00px;font-size:22px;line-height:22px;color:#111;left:1204.50px;letter-spacing:0.02px;-webkit-text-stroke:0.12px #111;">29.12.2022</div>
<div class="t" style="top:1253.00px;font-size:22px;line-height:22px;color:#111;left:1423.00px;letter-spacing:-0.05px;-webkit-text-stroke:0.12px #111;">Studio Fotografii i Video L.Sroka</div>
<div class="t" style="top:1253.00px;font-size:22px;line-height:22px;color:#111;left:1826.50px;letter-spacing:0.45px;-webkit-text-stroke:0.12px #111;">000113</div>
<div class="t" style="top:1253.00px;font-size:22px;line-height:22px;color:#111;right:1529.50px;letter-spacing:-0.1px;-webkit-text-stroke:0.12px #111;">11 250,91</div>
<div class="t" style="top:1253.00px;font-size:22px;line-height:22px;color:#111;right:1338.00px;letter-spacing:-0.1px;-webkit-text-stroke:0.12px #111;">2 587,71</div>
<div class="t" style="top:1253.00px;font-size:22px;line-height:22px;color:#111;right:1102.00px;letter-spacing:-0.1px;-webkit-text-stroke:0.12px #111;">13 838,62</div>
<div style="position:absolute;left:2082px;top:1284px;width:662.8000000000002px;height:40px;background:#bcdef8;"></div>
<div style="position:absolute;left:2744.8px;top:1284px;width:155.19999999999982px;height:40px;background:#dfe57a;"></div>
<div style="position:absolute;left:84.2px;top:1284px;width:1.6px;height:42px;background:#ececec;"></div>
<div style="position:absolute;left:128.2px;top:1284px;width:1.6px;height:42px;background:#ececec;"></div>
<div style="position:absolute;left:46.5px;top:1293.5px;width:23px;height:23px;background:#fff;box-sizing:border-box;border:2px solid #c9c9c9;border-radius:4px;"></div>
<div class="t" style="top:1295.00px;font-size:22px;line-height:22px;color:#111;left:145.00px;letter-spacing:0.45px;-webkit-text-stroke:0.12px #111;">2022/FV/M0/000047</div>
<div class="t" style="top:1295.00px;font-size:22px;line-height:22px;color:#111;left:548.50px;letter-spacing:0.15px;-webkit-text-stroke:0.12px #111;">M0</div>
<div class="t" style="top:1295.00px;font-size:22px;line-height:22px;color:#111;left:758.50px;letter-spacing:0.15px;-webkit-text-stroke:0.12px #111;">FV</div>
<div class="t" style="top:1295.00px;font-size:22px;line-height:22px;color:#111;left:964.50px;letter-spacing:0.02px;-webkit-text-stroke:0.12px #111;">27.12.2022</div>
<div class="t" style="top:1295.00px;font-size:22px;line-height:22px;color:#111;left:1204.50px;letter-spacing:0.02px;-webkit-text-stroke:0.12px #111;">29.12.2022</div>
<div class="t" style="top:1295.00px;font-size:22px;line-height:22px;color:#111;left:1423.00px;letter-spacing:-0.05px;-webkit-text-stroke:0.12px #111;">Barbara Sikorska</div>
<div class="t" style="top:1295.00px;font-size:22px;line-height:22px;color:#111;left:1826.50px;letter-spacing:0.45px;-webkit-text-stroke:0.12px #111;">000092</div>
<div class="t" style="top:1295.00px;font-size:22px;line-height:22px;color:#111;right:1529.50px;letter-spacing:-0.1px;-webkit-text-stroke:0.12px #111;">1 242,61</div>
<div class="t" style="top:1295.00px;font-size:22px;line-height:22px;color:#111;right:1338.00px;letter-spacing:-0.1px;-webkit-text-stroke:0.12px #111;">285,81</div>
<div class="t" style="top:1295.00px;font-size:22px;line-height:22px;color:#111;right:1102.00px;letter-spacing:-0.1px;-webkit-text-stroke:0.12px #111;">1 528,42</div>
<div style="position:absolute;left:32px;top:1200px;width:2868px;height:2px;background:#555;"></div>
<div style="position:absolute;left:32px;top:1240px;width:2868px;height:2px;background:#555;"></div>
<div style="position:absolute;left:32px;top:1202px;width:6px;height:38px;background:#0b6cb0;"></div>
<div style="position:absolute;left:32px;top:1318px;width:2868px;height:5px;background:#fff;"></div>
<svg style="position:absolute;left:36px;top:1348px;" width="10" height="26" viewBox="0 0 10 26"><circle cx="4" cy="4.5" r="2.6" fill="#444"/><circle cx="4" cy="13" r="2.6" fill="#444"/><circle cx="4" cy="21.5" r="2.6" fill="#444"/></svg>
<svg style="position:absolute;left:296px;top:1335px;" width="163" height="51" viewBox="0 0 163 51"><path d="M0,50.5 Q16,50.5 16,36 V16 A16,16 0 0 1 32,0 H131 A16,16 0 0 1 147,16 V36 Q147,50.5 163,50.5 Z" fill="#fff"/></svg>
<div class="t" style="top:1348.58px;font-size:22.5px;line-height:22.5px;color:#4a4a4a;left:97.50px;letter-spacing:-0.41px;-webkit-text-stroke:0.35px #4a4a4a;">Wg statusów KSeF</div>
<div class="t" style="top:1348.58px;font-size:22.5px;line-height:22.5px;color:#1a1a1a;left:340.00px;letter-spacing:-0.45px;-webkit-text-stroke:0.35px #1a1a1a;">Pozycje</div>
<div class="t" style="top:1348.58px;font-size:22.5px;line-height:22.5px;color:#4a4a4a;left:477.00px;letter-spacing:-0.13px;-webkit-text-stroke:0.35px #4a4a4a;">Dowody źródłowe</div>
<div class="t" style="top:1348.58px;font-size:22.5px;line-height:22.5px;color:#4a4a4a;left:717.00px;letter-spacing:-0.27px;-webkit-text-stroke:0.35px #4a4a4a;">Dowody sprzężone</div>
<div class="t" style="top:1348.58px;font-size:22.5px;line-height:22.5px;color:#4a4a4a;left:964.50px;letter-spacing:0.1px;-webkit-text-stroke:0.35px #4a4a4a;">Korekty</div>
<div class="t" style="top:1348.58px;font-size:22.5px;line-height:22.5px;color:#4a4a4a;left:1097.50px;letter-spacing:0.08px;-webkit-text-stroke:0.35px #4a4a4a;">Rozliczane zaliczki</div>
<div class="t" style="top:1348.58px;font-size:22.5px;line-height:22.5px;color:#4a4a4a;left:1345.00px;letter-spacing:-0.03px;-webkit-text-stroke:0.35px #4a4a4a;">Dziennik operacji</div>
<div class="t" style="top:1348.58px;font-size:22.5px;line-height:22.5px;color:#4a4a4a;left:1578.00px;letter-spacing:-0.07px;-webkit-text-stroke:0.35px #4a4a4a;">Kontrole biznesowe</div>
<div class="t" style="top:1348.58px;font-size:22.5px;line-height:22.5px;color:#4a4a4a;left:1832.00px;letter-spacing:0.05px;-webkit-text-stroke:0.35px #4a4a4a;">Załączniki</div>
<div style="position:absolute;left:340px;top:1381px;width:75px;height:4px;background:#0a84d0;"></div>
<div style="position:absolute;left:16px;top:1385px;width:3808px;height:773px;background:#fff;border-radius:16px;box-shadow:0 1px 1.5px rgba(0,0,0,0.16);"></div>
<svg style="position:absolute;left:38px;top:1403px;" width="36" height="36" viewBox="0 0 36 36"><path d="M9,11 V3.3 H27 V11" stroke="#333" stroke-width="2" fill="none"/><path d="M9,25.5 H3 V12.5 H33 V25.5 H27" stroke="#333" stroke-width="2" fill="none"/><rect x="9" y="22" width="18" height="11.5" stroke="#333" stroke-width="2" fill="#fff"/><path d="M12.5,26 H23.5 M12.5,29.5 H23.5" stroke="#333" stroke-width="1.8"/><path d="M6,17 H10" stroke="#1b83d0" stroke-width="1.8"/></svg>
<svg style="position:absolute;left:87px;top:1416px;" width="16" height="12" viewBox="0 0 16 12"><path d="M1.5,2.5 L8,9 L14.5,2.5" stroke="#333" stroke-width="2" fill="none"/></svg>
<svg style="position:absolute;left:130px;top:1403px;" width="36" height="36" viewBox="0 0 36 36"><rect x="2.7" y="14.5" width="8" height="19.5" stroke="#1aa64a" stroke-width="2" fill="#a7d8a9"/><rect x="14.2" y="3.3" width="8" height="30.7" stroke="#ef8a25" stroke-width="2" fill="#f9d68a"/><rect x="25.7" y="10" width="8" height="24" stroke="#e52b2b" stroke-width="2" fill="#f3b5b5"/></svg>
<svg style="position:absolute;left:173px;top:1416px;" width="16" height="12" viewBox="0 0 16 12"><path d="M1.5,2.5 L8,9 L14.5,2.5" stroke="#333" stroke-width="2" fill="none"/></svg>
<div style="position:absolute;left:32px;top:1455px;width:2868px;height:2px;background:#e6e6e6;"></div>
<div style="position:absolute;left:32px;top:1457px;width:2868px;height:79px;background:#f4f4f4;"></div>
<div style="position:absolute;left:181px;top:1496px;width:2719px;height:2px;background:#e6e6e6;"></div>
<div style="position:absolute;left:32px;top:1536px;width:2868px;height:2px;background:#e6e6e6;"></div>
<div style="position:absolute;left:84px;top:1457px;width:2px;height:39px;background:#e6e6e6;"></div>
<div style="position:absolute;left:180px;top:1457px;width:2px;height:39px;background:#e6e6e6;"></div>
<div style="position:absolute;left:211.4px;top:1457px;width:2px;height:39px;background:#e6e6e6;"></div>
<div style="position:absolute;left:1011.7px;top:1457px;width:2px;height:39px;background:#e6e6e6;"></div>
<div style="position:absolute;left:1797.5px;top:1457px;width:2px;height:39px;background:#e6e6e6;"></div>
<div style="position:absolute;left:2079.7px;top:1457px;width:2px;height:39px;background:#e6e6e6;"></div>
<div style="position:absolute;left:84px;top:1498px;width:2px;height:38px;background:#e6e6e6;"></div>
<div style="position:absolute;left:211.4px;top:1498px;width:2px;height:38px;background:#e6e6e6;"></div>
<div style="position:absolute;left:738px;top:1498px;width:2px;height:38px;background:#e6e6e6;"></div>
<div style="position:absolute;left:1011.7px;top:1498px;width:2px;height:38px;background:#e6e6e6;"></div>
<div style="position:absolute;left:1180px;top:1498px;width:2px;height:38px;background:#e6e6e6;"></div>
<div style="position:absolute;left:1345.6px;top:1498px;width:2px;height:38px;background:#e6e6e6;"></div>
<div style="position:absolute;left:1553.5px;top:1498px;width:2px;height:38px;background:#e6e6e6;"></div>
<div style="position:absolute;left:1797.5px;top:1498px;width:2px;height:38px;background:#e6e6e6;"></div>
<div style="position:absolute;left:1909.6px;top:1498px;width:2px;height:38px;background:#e6e6e6;"></div>
<div style="position:absolute;left:2079.7px;top:1498px;width:2px;height:38px;background:#e6e6e6;"></div>
<div style="position:absolute;left:2281.7px;top:1498px;width:2px;height:38px;background:#e6e6e6;"></div>
<div style="position:absolute;left:2489.7px;top:1498px;width:2px;height:38px;background:#e6e6e6;"></div>
<div style="position:absolute;left:2688px;top:1498px;width:2px;height:38px;background:#e6e6e6;"></div>
<div style="position:absolute;left:46.5px;top:1508px;width:23px;height:23px;background:#fff;box-sizing:border-box;border:2px solid #c9c9c9;border-radius:4px;"></div>
<svg style="position:absolute;left:187px;top:1466px;" width="20" height="20" viewBox="0 0 20 20"><path d="M10,4 V19" stroke="#888" stroke-width="1.7"/><path d="M2.3,10.8 L10,3 L17.7,10.8" stroke="#333" stroke-width="2" fill="none"/></svg>
<div class="t" style="top:1467.40px;font-size:22px;line-height:22px;color:#222;left:94.40px;-webkit-text-stroke:0.45px #222;">Lp</div>
<div class="t" style="top:1467.40px;font-size:22px;line-height:22px;color:#222;left:223.00px;-webkit-text-stroke:0.45px #222;">Kartoteka</div>
<div class="t" style="top:1467.40px;font-size:22px;line-height:22px;color:#222;left:1022.60px;-webkit-text-stroke:0.45px #222;">Dokument</div>
<div class="t" style="top:1467.40px;font-size:22px;line-height:22px;color:#222;left:1808.50px;-webkit-text-stroke:0.45px #222;">Rabaty</div>
<div class="t" style="top:1467.40px;font-size:22px;line-height:22px;color:#222;left:2090.70px;-webkit-text-stroke:0.45px #222;">Kwoty</div>
<div class="t" style="top:1505.40px;font-size:22px;line-height:22px;color:#222;left:223.00px;-webkit-text-stroke:0.45px #222;">Opis</div>
<div class="t" style="top:1505.40px;font-size:22px;line-height:22px;color:#222;left:748.60px;-webkit-text-stroke:0.45px #222;">Symbol</div>
<div class="t" style="top:1505.40px;font-size:22px;line-height:22px;color:#222;left:1022.60px;-webkit-text-stroke:0.45px #222;">Ilość</div>
<div class="t" style="top:1505.40px;font-size:22px;line-height:22px;color:#222;left:1190.00px;-webkit-text-stroke:0.45px #222;">JM</div>
<div class="t" style="top:1505.40px;font-size:22px;line-height:22px;color:#222;left:1356.00px;-webkit-text-stroke:0.45px #222;">Cena</div>
<div class="t" style="top:1505.40px;font-size:22px;line-height:22px;color:#222;left:1564.50px;-webkit-text-stroke:0.45px #222;">Cena po rabacie</div>
<div class="t" style="top:1505.40px;font-size:22px;line-height:22px;color:#222;left:1808.50px;-webkit-text-stroke:0.45px #222;">%</div>
<div class="t" style="top:1505.40px;font-size:22px;line-height:22px;color:#222;left:1920.50px;-webkit-text-stroke:0.45px #222;">Kwotowy</div>
<div class="t" style="top:1505.40px;font-size:22px;line-height:22px;color:#222;left:2090.70px;-webkit-text-stroke:0.45px #222;">Netto wal.</div>
<div class="t" style="top:1505.40px;font-size:22px;line-height:22px;color:#222;left:2292.70px;-webkit-text-stroke:0.45px #222;">Netto</div>
<div class="t" style="top:1505.40px;font-size:22px;line-height:22px;color:#222;left:2500.00px;-webkit-text-stroke:0.45px #222;">VAT</div>
<div class="t" style="top:1505.40px;font-size:22px;line-height:22px;color:#222;left:2698.80px;-webkit-text-stroke:0.45px #222;">Brutto</div>
<div style="position:absolute;left:86px;top:1538px;width:127.6px;height:42px;background:#d7d3cd;"></div>
<div style="position:absolute;left:740px;top:1538px;width:274px;height:42px;background:#fff07a;"></div>
<div style="position:absolute;left:1014px;top:1538px;width:167.5999999999999px;height:42px;background:#dde9c6;"></div>
<div style="position:absolute;left:2082px;top:1538px;width:202px;height:42px;background:#dfe57a;"></div>
<div style="position:absolute;left:2284px;top:1538px;width:616px;height:42px;background:#bcdef8;"></div>
<div style="position:absolute;left:32px;top:1578px;width:2868px;height:2px;background:#ececec;"></div>
<div style="position:absolute;left:84.2px;top:1538px;width:1.6px;height:42px;background:#ececec;"></div>
<div style="position:absolute;left:46.5px;top:1549px;width:23px;height:23px;background:#fff;box-sizing:border-box;border:2px solid #c9c9c9;border-radius:4px;"></div>
<div class="t" style="top:1549.40px;font-size:22px;line-height:22px;color:#111;right:3634.00px;letter-spacing:0.15px;-webkit-text-stroke:0.12px #111;">1</div>
<div class="t" style="top:1549.40px;font-size:22px;line-height:22px;color:#111;left:228.50px;letter-spacing:-0.3px;-webkit-text-stroke:0.12px #111;">Aparat Soney B5500 + ob. 16-50</div>
<div class="t" style="top:1549.40px;font-size:22px;line-height:22px;color:#111;left:754.50px;letter-spacing:-0.7px;-webkit-text-stroke:0.12px #111;">DSCB5500.CE3</div>
<div class="t" style="top:1549.40px;font-size:22px;line-height:22px;color:#111;right:2666.00px;letter-spacing:0.15px;-webkit-text-stroke:0.12px #111;">1</div>
<div class="t" style="top:1549.40px;font-size:22px;line-height:22px;color:#111;left:1196.50px;letter-spacing:0.15px;-webkit-text-stroke:0.12px #111;">szt</div>
<div class="t" style="top:1549.40px;font-size:22px;line-height:22px;color:#111;right:2292.00px;letter-spacing:-0.1px;-webkit-text-stroke:0.12px #111;">2 831,82</div>
<div class="t" style="top:1549.40px;font-size:22px;line-height:22px;color:#111;right:2048.00px;letter-spacing:-0.1px;-webkit-text-stroke:0.12px #111;">2 831,82</div>
<div class="t" style="top:1549.40px;font-size:22px;line-height:22px;color:#111;right:1936.00px;letter-spacing:0.15px;-webkit-text-stroke:0.12px #111;">0</div>
<div class="t" style="top:1549.40px;font-size:22px;line-height:22px;color:#111;right:1766.20px;letter-spacing:-0.1px;-webkit-text-stroke:0.12px #111;">0,00</div>
<div class="t" style="top:1549.40px;font-size:22px;line-height:22px;color:#111;right:1564.00px;letter-spacing:-0.1px;-webkit-text-stroke:0.12px #111;">2 831,82</div>
<div class="t" style="top:1549.40px;font-size:22px;line-height:22px;color:#111;right:1356.30px;letter-spacing:-0.1px;-webkit-text-stroke:0.12px #111;">2 831,82</div>
<div class="t" style="top:1549.40px;font-size:22px;line-height:22px;color:#111;right:1157.30px;letter-spacing:-0.1px;-webkit-text-stroke:0.12px #111;">651,32</div>
<div class="t" style="top:1549.40px;font-size:22px;line-height:22px;color:#111;right:932.00px;letter-spacing:-0.1px;-webkit-text-stroke:0.12px #111;">3 483,14</div>
<div style="position:absolute;left:86px;top:1580px;width:127.6px;height:42px;background:#d7d3cd;"></div>
<div style="position:absolute;left:740px;top:1580px;width:274px;height:42px;background:#fff07a;"></div>
<div style="position:absolute;left:1014px;top:1580px;width:167.5999999999999px;height:42px;background:#dde9c6;"></div>
<div style="position:absolute;left:2082px;top:1580px;width:202px;height:42px;background:#dfe57a;"></div>
<div style="position:absolute;left:2284px;top:1580px;width:616px;height:42px;background:#bcdef8;"></div>
<div style="position:absolute;left:32px;top:1620px;width:2868px;height:2px;background:#ececec;"></div>
<div style="position:absolute;left:84.2px;top:1580px;width:1.6px;height:42px;background:#ececec;"></div>
<div style="position:absolute;left:46.5px;top:1591px;width:23px;height:23px;background:#fff;box-sizing:border-box;border:2px solid #c9c9c9;border-radius:4px;"></div>
<div class="t" style="top:1591.40px;font-size:22px;line-height:22px;color:#111;right:3634.00px;letter-spacing:0.15px;-webkit-text-stroke:0.12px #111;">2</div>
<div class="t" style="top:1591.40px;font-size:22px;line-height:22px;color:#111;left:228.50px;letter-spacing:-0.3px;-webkit-text-stroke:0.12px #111;">Torba Hamo R-130</div>
<div class="t" style="top:1591.40px;font-size:22px;line-height:22px;color:#111;left:754.50px;letter-spacing:-0.15px;-webkit-text-stroke:0.12px #111;">AZHAMUL00093535</div>
<div class="t" style="top:1591.40px;font-size:22px;line-height:22px;color:#111;right:2666.00px;letter-spacing:0.15px;-webkit-text-stroke:0.12px #111;">4</div>
<div class="t" style="top:1591.40px;font-size:22px;line-height:22px;color:#111;left:1196.50px;letter-spacing:0.15px;-webkit-text-stroke:0.12px #111;">szt</div>
<div class="t" style="top:1591.40px;font-size:22px;line-height:22px;color:#111;right:2292.00px;letter-spacing:-0.1px;-webkit-text-stroke:0.12px #111;">195,11</div>
<div class="t" style="top:1591.40px;font-size:22px;line-height:22px;color:#111;right:2048.00px;letter-spacing:-0.1px;-webkit-text-stroke:0.12px #111;">195,11</div>
<div class="t" style="top:1591.40px;font-size:22px;line-height:22px;color:#111;right:1936.00px;letter-spacing:0.15px;-webkit-text-stroke:0.12px #111;">0</div>
<div class="t" style="top:1591.40px;font-size:22px;line-height:22px;color:#111;right:1766.20px;letter-spacing:-0.1px;-webkit-text-stroke:0.12px #111;">0,00</div>
<div class="t" style="top:1591.40px;font-size:22px;line-height:22px;color:#111;right:1564.00px;letter-spacing:-0.1px;-webkit-text-stroke:0.12px #111;">780,44</div>
<div class="t" style="top:1591.40px;font-size:22px;line-height:22px;color:#111;right:1356.30px;letter-spacing:-0.1px;-webkit-text-stroke:0.12px #111;">780,44</div>
<div class="t" style="top:1591.40px;font-size:22px;line-height:22px;color:#111;right:1157.30px;letter-spacing:-0.1px;-webkit-text-stroke:0.12px #111;">179,50</div>
<div class="t" style="top:1591.40px;font-size:22px;line-height:22px;color:#111;right:932.00px;letter-spacing:-0.1px;-webkit-text-stroke:0.12px #111;">959,94</div>
<div style="position:absolute;left:86px;top:1622px;width:127.6px;height:42px;background:#d7d3cd;"></div>
<div style="position:absolute;left:740px;top:1622px;width:274px;height:42px;background:#fff07a;"></div>
<div style="position:absolute;left:1014px;top:1622px;width:167.5999999999999px;height:42px;background:#dde9c6;"></div>
<div style="position:absolute;left:2082px;top:1622px;width:202px;height:42px;background:#dfe57a;"></div>
<div style="position:absolute;left:2284px;top:1622px;width:616px;height:42px;background:#bcdef8;"></div>
<div style="position:absolute;left:32px;top:1662px;width:2868px;height:2px;background:#ececec;"></div>
<div style="position:absolute;left:84.2px;top:1622px;width:1.6px;height:42px;background:#ececec;"></div>
<div style="position:absolute;left:46.5px;top:1633px;width:23px;height:23px;background:#fff;box-sizing:border-box;border:2px solid #c9c9c9;border-radius:4px;"></div>
<div class="t" style="top:1633.40px;font-size:22px;line-height:22px;color:#111;right:3634.00px;letter-spacing:0.15px;-webkit-text-stroke:0.12px #111;">3</div>
<div class="t" style="top:1633.40px;font-size:22px;line-height:22px;color:#111;left:228.50px;letter-spacing:-0.3px;-webkit-text-stroke:0.12px #111;">Kamera cyfrowa Soney FD-XP33</div>
<div class="t" style="top:1633.40px;font-size:22px;line-height:22px;color:#111;left:754.50px;letter-spacing:-1.0px;-webkit-text-stroke:0.12px #111;">FDRXP33.CEN</div>
<div class="t" style="top:1633.40px;font-size:22px;line-height:22px;color:#111;right:2666.00px;letter-spacing:0.15px;-webkit-text-stroke:0.12px #111;">3</div>
<div class="t" style="top:1633.40px;font-size:22px;line-height:22px;color:#111;left:1196.50px;letter-spacing:0.15px;-webkit-text-stroke:0.12px #111;">szt</div>
<div class="t" style="top:1633.40px;font-size:22px;line-height:22px;color:#111;right:2292.00px;letter-spacing:-0.1px;-webkit-text-stroke:0.12px #111;">5 503,41</div>
<div class="t" style="top:1633.40px;font-size:22px;line-height:22px;color:#111;right:2048.00px;letter-spacing:-0.1px;-webkit-text-stroke:0.12px #111;">5 503,41</div>
<div class="t" style="top:1633.40px;font-size:22px;line-height:22px;color:#111;right:1936.00px;letter-spacing:0.15px;-webkit-text-stroke:0.12px #111;">0</div>
<div class="t" style="top:1633.40px;font-size:22px;line-height:22px;color:#111;right:1766.20px;letter-spacing:-0.1px;-webkit-text-stroke:0.12px #111;">0,00</div>
<div class="t" style="top:1633.40px;font-size:22px;line-height:22px;color:#111;right:1564.00px;letter-spacing:-0.1px;-webkit-text-stroke:0.12px #111;">16 510,23</div>
<div class="t" style="top:1633.40px;font-size:22px;line-height:22px;color:#111;right:1356.30px;letter-spacing:-0.1px;-webkit-text-stroke:0.12px #111;">16 510,23</div>
<div class="t" style="top:1633.40px;font-size:22px;line-height:22px;color:#111;right:1157.30px;letter-spacing:-0.1px;-webkit-text-stroke:0.12px #111;">3 797,35</div>
<div class="t" style="top:1633.40px;font-size:22px;line-height:22px;color:#111;right:932.00px;letter-spacing:-0.1px;-webkit-text-stroke:0.12px #111;">20 307,58</div>
<div style="position:absolute;left:32px;top:1538px;width:2868px;height:2px;background:#555;"></div>
<div style="position:absolute;left:32px;top:1578px;width:2868px;height:2px;background:#555;"></div>
<div style="position:absolute;left:32px;top:1540px;width:6px;height:38px;background:#0b6cb0;"></div>
<div style="position:absolute;left:2890px;top:52px;width:950px;height:2108px;background:#f9f8f6;border-radius:16px 0 0 16px;box-shadow:-5px 0 16px rgba(0,0,0,0.28);"></div>
<div class="t" style="top:82.05px;font-size:29px;line-height:29px;color:#111;left:2921.00px;-webkit-text-stroke:0.6px #111;">Czat</div>
<svg style="position:absolute;left:3790px;top:81px;" width="32" height="32" viewBox="0 0 32 32"><path d="M4.5,4.5 L27.5,27.5 M27.5,4.5 L4.5,27.5" stroke="#666" stroke-width="3"/></svg>
<div style="position:absolute;left:2920.5px;top:140.5px;width:898.5px;height:51px;background:#fff;box-sizing:border-box;border:2px solid #c8c8c8;border-radius:9px;"></div>
<svg style="position:absolute;left:2931px;top:153px;" width="28" height="28" viewBox="0 0 28 28"><circle cx="11.5" cy="11" r="8" stroke="#a0a0a0" stroke-width="1.8" fill="none"/><path d="M17.3,16.8 L24,23.5" stroke="#a0a0a0" stroke-width="1.8"/></svg>
<div class="t" style="top:155.70px;font-size:22px;line-height:22px;color:#7f8fa0;left:2964.50px;letter-spacing:0.1px;">Wyszukaj...</div>
<div class="t" style="top:217.78px;font-size:22.5px;line-height:22.5px;color:#222;left:2940.50px;letter-spacing:-0.15px;-webkit-text-stroke:0.35px #222;">Wszystkie</div>
<div class="t" style="top:217.78px;font-size:22.5px;line-height:22.5px;color:#555;left:3106.00px;letter-spacing:0.05px;-webkit-text-stroke:0.35px #555;">Z aktualnego widoku</div>
<div class="t" style="top:217.78px;font-size:22.5px;line-height:22.5px;color:#555;left:3380.50px;letter-spacing:0.05px;-webkit-text-stroke:0.35px #555;">Sprawy w toku</div>
<div class="t" style="top:217.78px;font-size:22.5px;line-height:22.5px;color:#555;left:3590.00px;letter-spacing:0.6px;-webkit-text-stroke:0.35px #555;">Notatki</div>
<div style="position:absolute;left:2936px;top:247px;width:109px;height:4px;background:#0a84d0;"></div>
<div style="position:absolute;left:2911px;top:255px;width:908px;height:2px;background:#e6e5e3;"></div>
<div style="position:absolute;left:2924.5px;top:271px;width:881px;height:142px;background:#fff;box-sizing:border-box;border:2px solid #88c9ee;border-radius:10px;overflow:hidden;"></div>
<svg style="position:absolute;left:2924.5px;top:271px;" width="881" height="142" viewBox="0 0 881 142"><defs><clipPath id="c1"><rect x="2" y="2" width="877" height="138" rx="9"/></clipPath></defs><g clip-path="url(#c1)"><circle cx="851" cy="138.5" r="40.7" stroke="#e9f5fb" stroke-width="24.5" fill="none"/><path d="M842.60,29.00 L846.20,57.00 L855.80,57.00 L859.40,29.00 Z" fill="#e9f5fb"/><circle cx="851.00" cy="29.00" r="8.4" fill="#e9f5fb"/><circle cx="851.00" cy="57.00" r="4.8" fill="#e9f5fb"/><path d="M767.49,65.51 L791.11,83.89 L797.89,77.11 L779.51,53.49 Z" fill="#e9f5fb"/><circle cx="773.50" cy="59.50" r="8.5" fill="#e9f5fb"/><circle cx="794.50" cy="80.50" r="4.8" fill="#e9f5fb"/><path d="M741.86,140.50 L770.92,137.80 L771.08,128.20 L742.14,124.50 Z" fill="#e9f5fb"/><circle cx="742.00" cy="132.50" r="8" fill="#e9f5fb"/><circle cx="771.00" cy="133.00" r="4.8" fill="#e9f5fb"/></g></svg>
<svg style="position:absolute;left:2936px;top:305px;" width="70" height="70" viewBox="0 0 70 70"><g transform="translate(0,0)"><path d="M16,18 L27,25" stroke="#e4f2fb" stroke-width="8.5" stroke-linecap="round"/><path d="M36,17 L56,31" stroke="#e4f2fb" stroke-width="8.5" stroke-linecap="round"/><path d="M12,37 L34,57" stroke="#e4f2fb" stroke-width="8.5" stroke-linecap="round"/><path d="M40,33 L60,43" stroke="#e4f2fb" stroke-width="8.5" stroke-linecap="round"/><path d="M35,51 L44,59" stroke="#e4f2fb" stroke-width="8.5" stroke-linecap="round"/></g><path d="M45.8,29.2 H50.5 Q53.2,29.2 53.2,32 V45.5 Q53.2,48.3 50.5,48.3 H49.7 L50.3,53.5 L41.7,48.3 H30 Q27.2,48.3 27.2,45.5 V40 H45.8 Z" stroke="#0a86d4" stroke-width="1.3" fill="#fff" stroke-linejoin="round"/><path d="M21.5,21.3 H43.2 Q45.8,21.3 45.8,24 V38 Q45.8,40.6 43.2,40.6 H30.5 L22.3,46 V40.6 H21.5 Q18.8,40.6 18.8,38 V24 Q18.8,21.3 21.5,21.3 Z" stroke="#0a86d4" stroke-width="1.3" fill="#fff" stroke-linejoin="round"/><rect x="23.2" y="25.3" width="18.6" height="4" fill="#b8dcf2"/><rect x="23.2" y="31.5" width="9.7" height="3.4" fill="#b8dcf2"/></svg>
<div class="t" style="top:319.94px;font-size:24.3px;line-height:24.3px;color:#0a88d4;left:3012.50px;letter-spacing:0.1px;-webkit-text-stroke:0.4px #0a88d4;">Porozmawiaj z Asystentem</div>
<div class="t" style="top:352.94px;font-size:21.6px;line-height:21.6px;color:#444;left:3012.50px;letter-spacing:0.05px;">Sprawdź, jak może Ci pomóc w codziennej pracy.</div>
<div style="position:absolute;left:2924.5px;top:425px;width:881px;height:142px;background:#fff;box-sizing:border-box;border:2px solid #88c9ee;border-radius:10px;overflow:hidden;"></div>
<svg style="position:absolute;left:2924.5px;top:425px;" width="881" height="142" viewBox="0 0 881 142"><defs><clipPath id="c2"><rect x="2" y="2" width="877" height="138" rx="9"/></clipPath></defs><g clip-path="url(#c2)"><circle cx="851" cy="138.5" r="40.7" stroke="#e9f5fb" stroke-width="24.5" fill="none"/><path d="M842.60,29.00 L846.20,57.00 L855.80,57.00 L859.40,29.00 Z" fill="#e9f5fb"/><circle cx="851.00" cy="29.00" r="8.4" fill="#e9f5fb"/><circle cx="851.00" cy="57.00" r="4.8" fill="#e9f5fb"/><path d="M767.49,65.51 L791.11,83.89 L797.89,77.11 L779.51,53.49 Z" fill="#e9f5fb"/><circle cx="773.50" cy="59.50" r="8.5" fill="#e9f5fb"/><circle cx="794.50" cy="80.50" r="4.8" fill="#e9f5fb"/><path d="M741.86,140.50 L770.92,137.80 L771.08,128.20 L742.14,124.50 Z" fill="#e9f5fb"/><circle cx="742.00" cy="132.50" r="8" fill="#e9f5fb"/><circle cx="771.00" cy="133.00" r="4.8" fill="#e9f5fb"/></g></svg>
<svg style="position:absolute;left:2936px;top:460px;" width="70" height="70" viewBox="0 0 70 70"><g transform="translate(0,-1)"><path d="M16,18 L27,25" stroke="#e4f2fb" stroke-width="8.5" stroke-linecap="round"/><path d="M36,17 L56,31" stroke="#e4f2fb" stroke-width="8.5" stroke-linecap="round"/><path d="M12,37 L34,57" stroke="#e4f2fb" stroke-width="8.5" stroke-linecap="round"/><path d="M40,33 L60,43" stroke="#e4f2fb" stroke-width="8.5" stroke-linecap="round"/><path d="M35,51 L44,59" stroke="#e4f2fb" stroke-width="8.5" stroke-linecap="round"/></g><circle cx="33.3" cy="34.3" r="13.2" stroke="#0a86d4" stroke-width="2.6" fill="#fff"/><circle cx="33.3" cy="34.3" r="13.2" stroke="#fff" stroke-width="0.6" fill="none"/><path d="M42.5,45 L50.5,53" stroke="#0a86d4" stroke-width="5" stroke-linecap="round"/><path d="M42.5,45 L50.5,53" stroke="#bfe0f4" stroke-width="2.4" stroke-linecap="round"/><text x="26.8" y="38.4" font-family="Liberation Sans" font-size="10.5" fill="#0a86d4" stroke="#0a86d4" stroke-width="0.25" letter-spacing="-0.7">Ab</text><path d="M42,18.6 Q42.7,25.6 49.9,26.3 Q42.7,27 42,33.4 Q41.3,27 34.7,26.3 Q41.3,25.6 42,18.6 Z" fill="#fff" stroke="#0a86d4" stroke-width="1.4" stroke-linejoin="round"/></svg>
<div class="t" style="top:459.25px;font-size:24.3px;line-height:24.3px;color:#0a88d4;left:3012.50px;letter-spacing:0.1px;-webkit-text-stroke:0.4px #0a88d4;">Inteligentna Pomoc</div>
<div class="t" style="top:492.15px;font-size:21.7px;line-height:21.7px;color:#444;left:3012.50px;letter-spacing:0.07px;">Zadaj pytanie Asystentowi w języku naturalnym, aby udzielił odpowiedzi na</div>
<div class="t" style="top:517.65px;font-size:21.7px;line-height:21.7px;color:#444;left:3012.50px;letter-spacing:0.2px;">bazie pomocy i dokumentacji.</div>
<div style="position:absolute;left:2924.5px;top:578.5px;width:881px;height:141.5px;background:#fff;border-radius:10px;box-shadow:0 1.5px 1px rgba(0,0,0,0.18);"></div>
<div class="t" style="top:601.62px;font-size:21.5px;line-height:21.5px;color:#b2b2b2;left:3011.00px;letter-spacing:0.05px;">2023-11-22 14:01</div>
<div style="position:absolute;left:2944px;top:623.5px;width:52px;height:52px;background:#ededed;border-radius:50%;"></div>
<svg style="position:absolute;left:2954px;top:639.5px;" width="32" height="18" viewBox="0 0 32 18"><path d="M2,2 H29.4 M2,9 H29.4 M2,16 H16" stroke="#222" stroke-width="2.2"/></svg>
<div class="t" style="top:637.13px;font-size:24.2px;line-height:24.2px;color:#222;left:3011.00px;letter-spacing:0.1px;-webkit-text-stroke:0.4px #222;">Dokumemeny do weryfikacji</div>
<div class="t" style="top:676.47px;font-size:21.8px;line-height:21.8px;color:#4a4a4a;left:3011.00px;letter-spacing:0.0px;">Należy je sprawdzić do końca miesiąca</div>
<div style="position:absolute;left:2924.5px;top:732px;width:881px;height:141.5px;background:#fff;border-radius:10px;box-shadow:0 1.5px 1px rgba(0,0,0,0.18);"></div>
<div class="t" style="top:755.12px;font-size:21.5px;line-height:21.5px;color:#b2b2b2;left:3011.00px;letter-spacing:0.05px;">2023-11-22 13:59</div>
<div style="position:absolute;left:2944px;top:777px;width:52px;height:52px;background:#ededed;border-radius:50%;"></div>
<div class="t" style="top:792.07px;font-size:22.5px;line-height:22.5px;color:#111;left:2956.00px;letter-spacing:-0.5px;-webkit-text-stroke:0.3px #111;">PA</div>
<div style="position:absolute;left:2975.5px;top:807.5px;width:27px;height:27px;background:#fff;border-radius:50%;"></div>
<div style="position:absolute;left:2979px;top:811px;width:20px;height:20px;background:#e3e3e3;border-radius:50%;"></div>
<div class="t" style="top:790.63px;font-size:24.2px;line-height:24.2px;color:#222;left:3011.00px;letter-spacing:0.1px;-webkit-text-stroke:0.4px #222;">Piotr Adamski</div>
<div class="t" style="top:829.97px;font-size:21.8px;line-height:21.8px;color:#4a4a4a;left:3011.00px;letter-spacing:0.0px;">Ty: Myślę że właśnie tutaj jest ten błąd</div>
<div style="position:absolute;left:2924.5px;top:885.5px;width:881px;height:141.5px;background:#fff;border-radius:10px;box-shadow:0 1.5px 1px rgba(0,0,0,0.18);"></div>
<div class="t" style="top:908.62px;font-size:21.5px;line-height:21.5px;color:#b2b2b2;left:3011.00px;letter-spacing:0.05px;">2023-11-22 13:58</div>
<div style="position:absolute;left:2944px;top:930.5px;width:52px;height:52px;background:#ededed;border-radius:50%;"></div>
<div class="t" style="top:945.57px;font-size:22.5px;line-height:22.5px;color:#111;left:2956.00px;letter-spacing:-0.5px;-webkit-text-stroke:0.3px #111;">JK</div>
<div style="position:absolute;left:2975.5px;top:961.0px;width:27px;height:27px;background:#fff;border-radius:50%;"></div>
<div style="position:absolute;left:2979px;top:964.5px;width:20px;height:20px;background:#e3e3e3;border-radius:50%;"></div>
<div class="t" style="top:944.13px;font-size:24.2px;line-height:24.2px;color:#222;left:3011.00px;letter-spacing:0.1px;-webkit-text-stroke:0.4px #222;">Janusz Kuczkowski</div>
<div class="t" style="top:983.47px;font-size:21.8px;line-height:21.8px;color:#4a4a4a;left:3011.00px;letter-spacing:0.0px;">Ty: Cześć Janusz, podeślij mi linka do faktury o której rozmawialiśmy rano prz…</div>
<div style="position:absolute;left:2910px;top:2062px;width:910px;height:2px;background:#dcdcdc;"></div>
<div style="position:absolute;left:3620px;top:2084px;width:200px;height:52px;background:#0075b3;border-radius:9px;"></div>
<div class="t" style="top:2099.35px;font-size:21px;line-height:21px;color:#fff;left:3642.00px;font-weight:bold;letter-spacing:0px;">Rozpocznij czat</div>
<div style="position:absolute;left:0px;top:0px;width:3840px;height:52px;background:#008dd6;"></div>
<svg style="position:absolute;left:0px;top:0px;" width="680" height="52" viewBox="0 0 680 52"><path d="M0,0 H646 L673,52 H0 Z" fill="#0180c1"/><path d="M0,0 H248 C258,9 265,24 264,36 C263.5,44 262,50 261,52 H0 Z" fill="#006496"/><path d="M211,0 L169,52" stroke="#ffffff" stroke-opacity="0.10" stroke-width="1.2"/></svg>
<svg style="position:absolute;left:14px;top:16px;" width="28" height="20" viewBox="0 0 28 20"><rect x="0" y="1" width="28" height="2" fill="#fff"/><rect x="0" y="8.8" width="28" height="2" fill="#fff"/><rect x="0" y="17.2" width="28" height="2" fill="#fff"/></svg>
<div class="t" style="top:12.95px;font-size:25px;line-height:25px;color:#ffffff;left:58.00px;letter-spacing:-0.25px;-webkit-text-stroke:0.35px #ffffff;">softlab anywhere</div>
<svg style="position:absolute;left:272px;top:10px;" width="34" height="34" viewBox="0 0 34 34"><path d="M3.4,16 L17,4.5 L31,16" stroke="#fff" stroke-width="2.2" fill="none" stroke-linejoin="miter"/><path d="M7,13.5 V29.5 H13.6 V23.5 H21 V29.5 H27.3 V13.5" stroke="#fff" stroke-width="2.2" fill="none" stroke-linejoin="miter"/></svg>
<svg style="position:absolute;left:334px;top:8px;" width="42" height="38" viewBox="0 0 42 38"><path d="M16.5,32.5 A11.6,11.6 0 1 1 25.5,32.5 Q21.5,34 20.5,35.5" stroke="#fff" stroke-width="2.2" fill="none" stroke-linejoin="miter"/><path d="M21,2 V6.5 M3,20.4 H7.5 M34.5,20.4 H39 M7.5,7.8 L10.6,10.6 M34.5,7.8 L31.4,10.6" stroke="#fff" stroke-width="2.2"/></svg>
<svg style="position:absolute;left:403px;top:12px;" width="36" height="30" viewBox="0 0 36 30"><rect x="4.5" y="3" width="29.5" height="25" stroke="#fff" stroke-width="2.2" fill="none" stroke-linejoin="miter"/><path d="M1.8,6 V28" stroke="#fff" stroke-width="2.2" fill="none" stroke-linejoin="miter"/><rect x="11.5" y="9" width="7.5" height="7" stroke="#fff" stroke-width="2.2" fill="none" stroke-linejoin="miter"/><path d="M22.5,9.5 H30.5 M22.5,13 H30.5 M22.5,16.5 H30.5 M11.5,20 H30.5 M11.5,23.5 H30.5" stroke="#fff" stroke-width="2"/></svg>
<svg style="position:absolute;left:466px;top:10px;" width="36" height="36" viewBox="0 0 36 36"><path d="M3,3 H27 A6,6 0 0 1 33,9 V33 H9 A6,6 0 0 1 3,27 Z" stroke="#fff" stroke-width="2.2" fill="none" stroke-linejoin="miter"/><text x="11" y="28.5" font-family="Liberation Sans" font-size="14.5" fill="#fff">BC</text></svg>
<div style="position:absolute;left:526px;top:5px;width:199px;height:41.5px;background:#b4dcf2;border-radius:8px;"></div>
<div class="t" style="top:16.70px;font-size:22px;line-height:22px;color:#0b6fa8;left:547.50px;letter-spacing:0.1px;-webkit-text-stroke:0.35px #0b6fa8;">Otwórz w HTML</div>
<div style="position:absolute;left:1690px;top:5px;width:460px;height:41.5px;background:#dff0fa;border-radius:8px;"></div>
<svg style="position:absolute;left:1698px;top:10px;" width="32" height="32" viewBox="0 0 32 32"><circle cx="13" cy="13.5" r="9.5" stroke="#0e6fa6" stroke-width="2.2" fill="none"/><path d="M20,21 L27.5,28.5" stroke="#0e6fa6" stroke-width="2.2"/></svg>
<div class="t" style="top:17.29px;font-size:21.3px;line-height:21.3px;color:#0e6fa6;left:1739.00px;letter-spacing:0.05px;">Wyszukaj (Alt + Q)</div>
<div class="t" style="top:17.62px;font-size:21.5px;line-height:21.5px;color:#ffffff;left:3169.00px;letter-spacing:0px;-webkit-text-stroke:0.15px #ffffff;">1 - Foto Świat</div>
<svg style="position:absolute;left:3450px;top:16px;" width="24" height="20" viewBox="0 0 24 20"><path d="M5.5,6.5 L12,13 L18.5,6.5" stroke="#fff" stroke-width="3.4" fill="none"/></svg>
<svg style="position:absolute;left:3502px;top:11px;" width="30" height="30" viewBox="0 0 30 30"><circle cx="15" cy="15" r="12.2" stroke="#fff" stroke-width="2" fill="none"/><path d="M11,11.5 A4,4 0 1 1 16.5,15 Q15,16 15,18.5" stroke="#fff" stroke-width="2" fill="none"/><circle cx="15" cy="22" r="1.3" fill="#fff"/></svg>
<svg style="position:absolute;left:3556px;top:9px;" width="32" height="34" viewBox="0 0 32 34"><path d="M8,26.5 V14 A8,8 0 0 1 24,14 V26.5" stroke="#fff" stroke-width="2" fill="none"/><path d="M4,27 H28" stroke="#fff" stroke-width="2.2"/><circle cx="16" cy="4.2" r="1.8" fill="#fff"/><rect x="13.5" y="30.2" width="5" height="2.2" fill="#fff"/></svg>
<svg style="position:absolute;left:3620px;top:14px;" width="10" height="24" viewBox="0 0 10 24"><rect x="3" y="2" width="4.2" height="4.2" fill="#fff"/><rect x="3" y="10" width="4.2" height="4.2" fill="#fff"/><rect x="3" y="18" width="4.2" height="4.2" fill="#fff"/></svg>
<div style="position:absolute;left:3663.5px;top:10px;width:4px;height:32px;background:rgba(255,255,255,0.22);"></div>
<div style="position:absolute;left:3698px;top:29px;width:18px;height:2px;background:#fff;"></div>
<svg style="position:absolute;left:3750px;top:13px;" width="22" height="22" viewBox="0 0 22 22"><rect x="2.8" y="6.2" width="13" height="13" stroke="#fff" stroke-width="1.8" fill="none"/><path d="M6.2,6.2 V2.8 H19.2 V15.8 H15.8" stroke="#fff" stroke-width="1.8" fill="none"/></svg>
<svg style="position:absolute;left:3806px;top:15px;" width="22" height="22" viewBox="0 0 22 22"><path d="M2,2 L19,19 M19,2 L2,19" stroke="#fff" stroke-width="1.8"/></svg>
</div></body></html>
